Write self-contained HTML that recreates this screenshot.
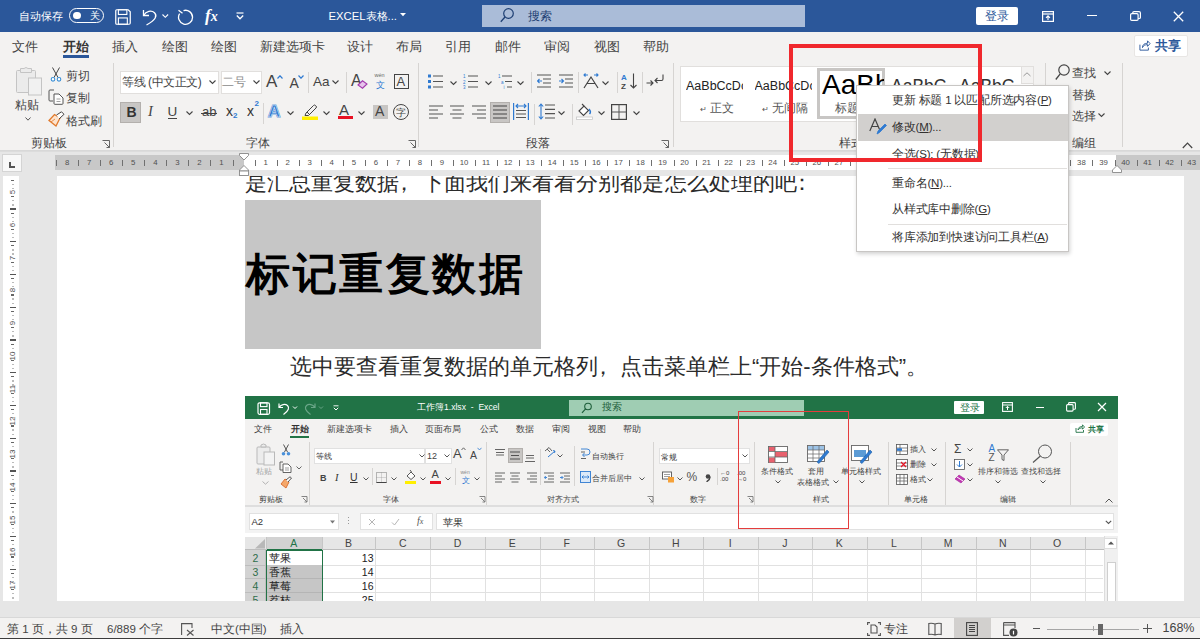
<!DOCTYPE html>
<html><head><meta charset="utf-8">
<style>
*{box-sizing:border-box;margin:0;padding:0}
html,body{width:1200px;height:639px;overflow:hidden;background:#e6e6e6;font-family:"Liberation Sans",sans-serif;color:#323130}
.a{position:absolute;white-space:nowrap}
#title{left:0;top:0;width:1200px;height:32px;background:#2b579a;color:#fff}
#tabs{left:0;top:32px;width:1200px;height:28px;background:#f3f2f1}
#ribbon{left:0;top:60px;width:1200px;height:90px;background:#f3f2f1}
#rshadow{left:0;top:150px;width:1200px;height:4px;background:linear-gradient(#d6d6d6,#e6e6e6)}
.tab{font-size:13px;top:37.5px;color:#444}
.t12{font-size:12px}
.sep{width:1px;background:#d6d4d2}
#status{left:0;top:617px;width:1200px;height:22px;background:#f3f2f1;border-top:1px solid #dcdcdc}
</style></head><body>
<!-- title bar -->
<div id="title" class="a"></div>
<div id="tabs" class="a"></div>
<div id="ribbon" class="a"></div>
  <div class="a" style="left:19px;top:8.5px;font-size:11px;color:#fff">自动保存</div>
  <div class="a" style="left:68.5px;top:8px;width:35.5px;height:15px;border:1.2px solid #fff;border-radius:8px"></div>
  <div class="a" style="left:73px;top:11.8px;width:7.5px;height:7.5px;border-radius:50%;background:#fff"></div>
  <div class="a" style="left:89.5px;top:9.5px;font-size:9.5px;color:#fff">关</div>
  <svg class="a" style="left:114.5px;top:9px" width="16" height="16" viewBox="0 0 17 17"><path d="M1.8 0.8 L14 0.8 L16.2 3 L16.2 15 Q16.2 16.2 15 16.2 L2 16.2 Q0.8 16.2 0.8 15 L0.8 1.8 Q0.8 0.8 1.8 0.8 Z" fill="none" stroke="#fff" stroke-width="1.3"/><rect x="3.6" y="0.8" width="9" height="5" fill="none" stroke="#fff" stroke-width="1.2"/><rect x="3.6" y="9.5" width="9.5" height="6.7" fill="none" stroke="#fff" stroke-width="1.2"/></svg>
  <svg class="a" style="left:142px;top:9px" width="17" height="17" viewBox="0 0 17 17"><path d="M1.5 1 L1.5 6.5 L7 6.5" fill="none" stroke="#fff" stroke-width="1.3"/><path d="M1.8 6.3 C4 2 9.5 1 12.5 3.8 C15.5 6.8 14 10.5 4.5 16" fill="none" stroke="#fff" stroke-width="1.3"/></svg>
  <svg class="a" style="left:162px;top:13.5px" width="7" height="5"><path d="M0.5 0.5 L3.3 3.3 L6.1 0.5" fill="none" stroke="#fff" stroke-width="1.1"/></svg>
  <svg class="a" style="left:177px;top:9px" width="17" height="17" viewBox="0 0 17 17"><path d="M6.5 1.6 A7 7 0 1 1 2.6 4.6" fill="none" stroke="#fff" stroke-width="1.3"/><path d="M1.5 1.2 L5.5 4.2" fill="none" stroke="#fff" stroke-width="1.3"/></svg>
  <div class="a" style="left:205px;top:6px;font-family:'Liberation Serif',serif;font-style:italic;font-weight:bold;font-size:17px;color:#fff">f<span style="font-size:14px">x</span></div>
  <svg class="a" style="left:235.5px;top:12px" width="8" height="8"><path d="M0.5 1 L7.5 1" stroke="#fff" stroke-width="1.2"/><path d="M0.8 3.5 L4 6.8 L7.2 3.5" fill="none" stroke="#fff" stroke-width="1.3"/></svg>
  <div class="a" style="left:328.5px;top:8.5px;font-size:11.3px;color:#fff">EXCEL表格...</div>
  <svg class="a" style="left:399.5px;top:13px" width="6" height="4"><path d="M0 0 L6 0 L3 3.3Z" fill="#fff"/></svg>
  <div class="a" style="left:481.5px;top:5px;width:323.5px;height:21.5px;background:#aabcd8"></div>
  <svg class="a" style="left:500px;top:8px" width="14" height="15" viewBox="0 0 14 15"><circle cx="8.5" cy="5.5" r="4.8" fill="none" stroke="#1e3f73" stroke-width="1.2"/><path d="M5 9 L0.8 13.8" stroke="#1e3f73" stroke-width="1.3"/></svg>
  <div class="a" style="left:527.5px;top:8px;font-size:12px;color:#1e3f73">搜索</div>
  <div class="a" style="left:976px;top:6.5px;width:42px;height:18.5px;background:#fff;border-radius:2px"></div>
  <div class="a" style="left:985px;top:9px;font-size:11.5px;color:#2b579a">登录</div>
  <svg class="a" style="left:1042px;top:10.5px" width="12" height="11" viewBox="0 0 12 11"><rect x="0.6" y="0.6" width="10.8" height="9.8" fill="none" stroke="#fff" stroke-width="1.2"/><path d="M0.6 3 L11.4 3" stroke="#fff" stroke-width="1.2"/><path d="M6 9 L6 4.8 M4 6.8 L6 4.8 L8 6.8" fill="none" stroke="#fff" stroke-width="1.1"/></svg>
  <div class="a" style="left:1087px;top:14.5px;width:10px;height:1.3px;background:#fff"></div>
  <svg class="a" style="left:1130px;top:11px" width="11" height="10" viewBox="0 0 11 10"><rect x="0.6" y="2.6" width="7.5" height="6.8" rx="1.2" fill="none" stroke="#fff" stroke-width="1.2"/><path d="M2.8 2.6 L2.8 1.8 Q2.8 0.6 4 0.6 L9 0.6 Q10.4 0.6 10.4 2 L10.4 6.5 Q10.4 7.5 9.2 7.5 L8.1 7.5" fill="none" stroke="#fff" stroke-width="1.2"/></svg>
  <svg class="a" style="left:1172.5px;top:10.5px" width="11" height="11"><path d="M0.8 0.8 L10.2 10.2 M10.2 0.8 L0.8 10.2" stroke="#fff" stroke-width="1.3"/></svg>
  <!-- share button -->
  <div class="a" style="left:1133.5px;top:35px;width:54.5px;height:21.5px;background:#fff;border:1px solid #e8e6e4;border-radius:2px"></div>
  <svg class="a" style="left:1139px;top:40px" width="12" height="11" viewBox="0 0 14 13"><path d="M1 5.5 L1 12 L11 12 L11 9" fill="none" stroke="#2b579a" stroke-width="1.1"/><path d="M4 9 C4 5.5 6.5 3.8 10 3.8 L10 1 L13 4.3 L10 7.5 L10 5.5 C7 5.5 5 6.5 4 9" fill="none" stroke="#2b579a" stroke-width="1.1"/></svg>
  <div class="a" style="left:1154.5px;top:38px;font-size:12.5px;font-weight:bold;color:#2b579a">共享</div>
<div class="a tab" style="left:12px">文件</div>
<div class="a tab" style="left:63px;font-weight:bold;color:#333">开始</div>
<div class="a" style="left:63px;top:55px;width:26px;height:3px;background:#2b579a"></div>
<div class="a tab" style="left:112px">插入</div>
<div class="a tab" style="left:162px">绘图</div>
<div class="a tab" style="left:211px">绘图</div>
<div class="a tab" style="left:260px">新建选项卡</div>
<div class="a tab" style="left:347px">设计</div>
<div class="a tab" style="left:396px">布局</div>
<div class="a tab" style="left:445px">引用</div>
<div class="a tab" style="left:495px">邮件</div>
<div class="a tab" style="left:544px">审阅</div>
<div class="a tab" style="left:594px">视图</div>
<div class="a tab" style="left:643px">帮助</div>
<div id="rshadow" class="a"></div>
<!-- ===== word ribbon ===== -->
<div class="a" style="left:0;top:0;width:1200px;height:639px;font-size:12px;color:#444">
  <!-- clipboard -->
  <svg class="a" style="left:16px;top:67px" width="27" height="29" viewBox="0 0 27 29"><rect x="0.5" y="3.5" width="19" height="22" rx="1" fill="#ebebeb" stroke="#c4c4c4"/><path d="M4.5 3.5 L4.5 1.5 L8 1.5 Q10 -0.5 12 1.5 L15.5 1.5 L15.5 5.5 L4.5 5.5 Z" fill="#ebebeb" stroke="#c4c4c4"/><rect x="12.5" y="11" width="13" height="17" fill="#f1f1f1" stroke="#c4c4c4"/></svg>
  <div class="a" style="left:15px;top:97px;font-size:12px;color:#444">粘贴</div>
  <svg class="a" style="left:25px;top:117px" width="6" height="4"><path d="M0.5 0.5 L3 3.2 L5.5 0.5" fill="none" stroke="#555" stroke-width="1"/></svg>
  <svg class="a" style="left:50px;top:67px" width="12" height="15" viewBox="0 0 12 15"><path d="M2.5 0.5 L8 10.5 M9.5 0.5 L4 10.5" stroke="#444" stroke-width="1"/><circle cx="3" cy="12.3" r="1.8" fill="#fff" stroke="#3a8fd6" stroke-width="1.1"/><circle cx="9" cy="12.3" r="1.8" fill="#fff" stroke="#3a8fd6" stroke-width="1.1"/></svg>
  <div class="a" style="left:66px;top:68px">剪切</div>
  <svg class="a" style="left:48px;top:89px" width="16" height="16" viewBox="0 0 16 16"><path d="M6 1 L2 1 Q1 1 1 2 L1 11 Q1 12 2 12 L5 12" fill="none" stroke="#555" stroke-width="1"/><path d="M6 5 L11 5 L15 9 L15 14.5 Q15 15.3 14 15.3 L7 15.3 Q6 15.3 6 14.5 Z" fill="#fff" stroke="#555" stroke-width="1"/><path d="M8.5 10 L12.5 10 M8.5 12.5 L12.5 12.5" stroke="#888" stroke-width="0.8"/></svg>
  <div class="a" style="left:66px;top:90px">复制</div>
  <svg class="a" style="left:48px;top:111px" width="17" height="16" viewBox="0 0 17 16"><path d="M1 9.5 L8 15 L12 7 L6.5 3.5 Z" fill="#fde3cd" stroke="#e17a2d" stroke-width="1.3"/><path d="M3 11 L7 8" stroke="#e17a2d" stroke-width="0.8"/><path d="M8.5 4 L13.5 0.8 L16 3.3 L11 8" fill="#fff" stroke="#444" stroke-width="1"/></svg>
  <div class="a" style="left:66px;top:113px">格式刷</div>
  <div class="a" style="left:31px;top:135px">剪贴板</div>
  <svg class="a" style="left:102px;top:139.5px" width="8" height="8"><path d="M0.5 0.5 L7.5 0.5 L7.5 7.5 M2.5 2.5 L7.5 7.5 M4.5 7.5 L7.5 7.5 L7.5 4.5" fill="none" stroke="#666" stroke-width="1"/></svg>
  <div class="a sep" style="left:113px;top:63px;height:84px"></div>
  <!-- font -->
  <div class="a" style="left:120px;top:71px;width:98.5px;height:22.5px;background:#fff;border:1px solid #e1dfdd"></div>
  <div class="a" style="left:122px;top:74px;font-size:12px;color:#444;letter-spacing:-0.45px">等线 (中文正文)</div>
  <svg class="a" style="left:209px;top:80px" width="7" height="5"><path d="M0.5 0.5 L3.5 3.5 L6.5 0.5" fill="none" stroke="#444" stroke-width="1.1"/></svg>
  <div class="a" style="left:220.5px;top:71px;width:41.5px;height:22.5px;background:#fff;border:1px solid #e1dfdd"></div>
  <div class="a" style="left:222px;top:74px;font-size:12px;color:#8a8a8a">二号</div>
  <svg class="a" style="left:253px;top:80px" width="7" height="5"><path d="M0.5 0.5 L3.5 3.5 L6.5 0.5" fill="none" stroke="#444" stroke-width="1.1"/></svg>
  <div class="a" style="left:266px;top:72px;font-size:17px;color:#444">A</div>
  <svg class="a" style="left:276.5px;top:74.5px" width="6" height="4"><path d="M0.5 3.5 L3 0.8 L5.5 3.5" fill="none" stroke="#2f7ad1" stroke-width="1.2"/></svg>
  <div class="a" style="left:289.5px;top:75px;font-size:14px;color:#444">A</div>
  <svg class="a" style="left:297.5px;top:74.5px" width="6" height="4"><path d="M0.5 0.5 L3 3.2 L5.5 0.5" fill="none" stroke="#2f7ad1" stroke-width="1.2"/></svg>
  <div class="a sep" style="left:308px;top:72px;height:21px"></div>
  <div class="a" style="left:313px;top:74px;font-size:13.5px;color:#444">Aa</div>
  <svg class="a" style="left:332px;top:80px" width="7" height="5"><path d="M0.5 0.5 L3.5 3.5 L6.5 0.5" fill="none" stroke="#444" stroke-width="1.1"/></svg>
  <div class="a sep" style="left:345.5px;top:72px;height:21px"></div>
  <div class="a" style="left:351px;top:72px;font-size:16px;color:#444">A</div>
  <svg class="a" style="left:357px;top:80px" width="11" height="9" viewBox="0 0 11 9"><path d="M1 5 L5.5 0.8 L10 4 L5.5 8.2 Z" fill="#e6c4ec" stroke="#a33aad" stroke-width="1.1"/></svg>
  <div class="a" style="left:374.5px;top:72px;font-size:5.5px;color:#666">wén</div>
  <div class="a" style="left:376px;top:79px;font-size:9px;color:#2f7ad1">文</div>
  <div class="a" style="left:393.5px;top:74px;width:15.5px;height:15px;border:1.2px solid #444"></div>
  <div class="a" style="left:396.5px;top:74px;font-size:13px;color:#444">A</div>
  <!-- row 2 -->
  <div class="a" style="left:120px;top:102px;width:21px;height:21px;background:#c8c6c4;border:1px solid #b3b0ad"></div>
  <div class="a" style="left:126.5px;top:104px;font-size:14px;font-weight:bold;color:#333">B</div>
  <div class="a" style="left:148px;top:103px;font-size:14.5px;font-style:italic;font-family:'Liberation Serif',serif;color:#444">I</div>
  <div class="a" style="left:167.5px;top:104px;font-size:13.5px;color:#444">U</div>
  <div class="a" style="left:167.5px;top:117.5px;width:9.5px;height:1.2px;background:#444"></div>
  <svg class="a" style="left:186px;top:111px" width="7" height="5"><path d="M0.5 0.5 L3.5 3.5 L6.5 0.5" fill="none" stroke="#444" stroke-width="1.1"/></svg>
  <div class="a" style="left:202px;top:104px;font-size:13px;color:#444">ab</div>
  <div class="a" style="left:200.5px;top:112.5px;width:16px;height:1.2px;background:#444"></div>
  <div class="a" style="left:226px;top:103px;font-size:14px;color:#333">x</div>
  <div class="a" style="left:233px;top:111px;font-size:8px;color:#2f7ad1;font-weight:bold">2</div>
  <div class="a" style="left:247px;top:103px;font-size:14px;color:#333">x</div>
  <div class="a" style="left:254.5px;top:99px;font-size:8px;color:#2f7ad1;font-weight:bold">2</div>
  <div class="a sep" style="left:263px;top:103px;height:21px"></div>
  <div class="a" style="left:268px;top:102px;font-size:17px;font-weight:bold;color:#2f7ad1;-webkit-text-stroke:1.2px #2f7ad1">A</div><div class="a" style="left:268px;top:102px;font-size:17px;font-weight:bold;color:transparent;-webkit-text-stroke:0.5px #fff">A</div>
  <svg class="a" style="left:287px;top:111px" width="7" height="5"><path d="M0.5 0.5 L3.5 3.5 L6.5 0.5" fill="none" stroke="#444" stroke-width="1.1"/></svg>
  <svg class="a" style="left:302px;top:103px" width="16" height="17" viewBox="0 0 16 17"><path d="M4 10 L11.5 2.5 Q12.5 1.5 13.5 2.5 L14 3 Q15 4 14 5 L6.5 12.5 L3 12.5 Z" fill="none" stroke="#444" stroke-width="1"/><path d="M5 9 L8 12" stroke="#444" stroke-width="1"/><rect x="0" y="13.5" width="16" height="3.5" fill="#ffef00"/></svg>
  <svg class="a" style="left:323px;top:111px" width="7" height="5"><path d="M0.5 0.5 L3.5 3.5 L6.5 0.5" fill="none" stroke="#444" stroke-width="1.1"/></svg>
  <div class="a" style="left:339px;top:101px;font-size:15px;color:#444">A</div>
  <div class="a" style="left:337.5px;top:115.5px;width:15px;height:3.5px;background:#e81123"></div>
  <svg class="a" style="left:358px;top:111px" width="7" height="5"><path d="M0.5 0.5 L3.5 3.5 L6.5 0.5" fill="none" stroke="#444" stroke-width="1.1"/></svg>
  <div class="a" style="left:372.5px;top:104.5px;width:15px;height:14.5px;background:#c8c6c4"></div>
  <div class="a" style="left:375px;top:103px;font-size:14px;color:#444">A</div>
  <div class="a" style="left:393px;top:104px;width:16px;height:16px;border:1.1px solid #444;border-radius:50%"></div>
  <div class="a" style="left:396px;top:105.5px;font-size:10px;color:#444">字</div>
  <div class="a" style="left:246px;top:135px">字体</div>
  <svg class="a" style="left:408px;top:139.5px" width="8" height="8"><path d="M0.5 0.5 L7.5 0.5 L7.5 7.5 M2.5 2.5 L7.5 7.5 M4.5 7.5 L7.5 7.5 L7.5 4.5" fill="none" stroke="#666" stroke-width="1"/></svg>
  <div class="a sep" style="left:418px;top:63px;height:84px"></div>
  <div id="para"></div>
  <!-- paragraph -->
  <svg class="a" style="left:428px;top:74px" width="16" height="15" viewBox="0 0 16 15"><rect x="0" y="0.5" width="3" height="3" fill="#2f7ad1"/><rect x="0" y="6" width="3" height="3" fill="#2f7ad1"/><rect x="0" y="11.5" width="3" height="3" fill="#2f7ad1"/><path d="M5 2 L15 2 M5 7.5 L15 7.5 M5 13 L15 13" stroke="#555" stroke-width="1.2"/></svg>
  <svg class="a" style="left:449.5px;top:80.5px" width="7" height="5"><path d="M0.5 0.5 L3.5 3.5 L6.5 0.5" fill="none" stroke="#444" stroke-width="1.1"/></svg>
  <svg class="a" style="left:463px;top:74px" width="16" height="15" viewBox="0 0 16 15"><text x="0" y="4" font-size="4.5" fill="#2f7ad1" font-family="Liberation Sans">1</text><text x="0" y="9.5" font-size="4.5" fill="#2f7ad1" font-family="Liberation Sans">2</text><text x="0" y="15" font-size="4.5" fill="#2f7ad1" font-family="Liberation Sans">3</text><path d="M5 2 L15 2 M5 7.5 L15 7.5 M5 13 L15 13" stroke="#555" stroke-width="1.2"/></svg>
  <svg class="a" style="left:484.5px;top:80.5px" width="7" height="5"><path d="M0.5 0.5 L3.5 3.5 L6.5 0.5" fill="none" stroke="#444" stroke-width="1.1"/></svg>
  <svg class="a" style="left:498px;top:74px" width="15" height="15" viewBox="0 0 15 15"><text x="0" y="4" font-size="4.5" fill="#2f7ad1" font-family="Liberation Sans">1</text><text x="3" y="9.5" font-size="4.5" fill="#2f7ad1" font-family="Liberation Sans">a</text><text x="5.5" y="15" font-size="4.5" fill="#2f7ad1" font-family="Liberation Sans">i</text><path d="M4 2 L14 2 M7 7.5 L14 7.5 M9 13 L14 13" stroke="#555" stroke-width="1.2"/></svg>
  <svg class="a" style="left:517px;top:80.5px" width="7" height="5"><path d="M0.5 0.5 L3.5 3.5 L6.5 0.5" fill="none" stroke="#444" stroke-width="1.1"/></svg>
  <div class="a sep" style="left:531px;top:72px;height:21px"></div>
  <svg class="a" style="left:537px;top:74px" width="15" height="14" viewBox="0 0 15 14"><path d="M0 1 L14 1 M6 5 L14 5 M6 9 L14 9 M0 13 L14 13" stroke="#555" stroke-width="1.2"/><path d="M5 7 L0.5 7 M2.5 5 L0.5 7 L2.5 9" fill="none" stroke="#2f7ad1" stroke-width="1.1"/></svg>
  <svg class="a" style="left:558.5px;top:74px" width="15" height="14" viewBox="0 0 15 14"><path d="M0 1 L14 1 M6 5 L14 5 M6 9 L14 9 M0 13 L14 13" stroke="#555" stroke-width="1.2"/><path d="M0 7 L4.5 7 M2.5 5 L4.5 7 L2.5 9" fill="none" stroke="#2f7ad1" stroke-width="1.1"/></svg>
  <div class="a sep" style="left:578px;top:72px;height:21px"></div>
  <svg class="a" style="left:583px;top:72px" width="16" height="17" viewBox="0 0 16 17"><path d="M1 16 L8 5 L15 16 M4 11.5 L12 11.5" fill="none" stroke="#444" stroke-width="1.2"/><path d="M1 3 L5 3 M2.5 1.5 L1 3 L2.5 4.5 M15 3 L11 3 M13.5 1.5 L15 3 L13.5 4.5" fill="none" stroke="#2f7ad1" stroke-width="1.1"/></svg>
  <svg class="a" style="left:602px;top:80.5px" width="7" height="5"><path d="M0.5 0.5 L3.5 3.5 L6.5 0.5" fill="none" stroke="#444" stroke-width="1.1"/></svg>
  <div class="a sep" style="left:616.5px;top:72px;height:21px"></div>
  <svg class="a" style="left:621px;top:73px" width="17" height="16" viewBox="0 0 17 16"><text x="0" y="7" font-size="8" fill="#2f7ad1" font-family="Liberation Sans" font-weight="bold">A</text><text x="0" y="15.5" font-size="8" fill="#444" font-family="Liberation Sans" font-weight="bold">Z</text><path d="M12.5 0.5 L12.5 15 M9.5 12 L12.5 15 L15.5 12" fill="none" stroke="#444" stroke-width="1.1"/></svg>
  <div class="a sep" style="left:641.5px;top:72px;height:21px"></div>
  <svg class="a" style="left:646px;top:74px" width="18" height="14" viewBox="0 0 18 14"><path d="M0.5 9 L7 9 M4.5 6.5 L7 9 L4.5 11.5" fill="none" stroke="#444" stroke-width="1.1"/><path d="M17 0.5 L17 5 Q17 6.5 15.5 6.5 L9 6.5 M11.5 4 L9 6.5 L11.5 9" fill="none" stroke="#444" stroke-width="1.1"/></svg>
  <!-- row2 -->
  <svg class="a" style="left:429px;top:105px" width="15" height="14"><path d="M0 1 L14 1 M0 5 L9 5 M0 9 L14 9 M0 13 L9 13" stroke="#555" stroke-width="1.2"/></svg>
  <svg class="a" style="left:450px;top:105px" width="15" height="14"><path d="M0 1 L14 1 M2.5 5 L11.5 5 M0 9 L14 9 M2.5 13 L11.5 13" stroke="#555" stroke-width="1.2"/></svg>
  <svg class="a" style="left:471.5px;top:105px" width="15" height="14"><path d="M0 1 L14 1 M5 5 L14 5 M0 9 L14 9 M5 13 L14 13" stroke="#555" stroke-width="1.2"/></svg>
  <div class="a" style="left:490px;top:102px;width:20px;height:21px;background:#c8c6c4;border:1px solid #b3b0ad"></div>
  <svg class="a" style="left:493px;top:105px" width="15" height="14"><path d="M0 1 L14 1 M0 5 L14 5 M0 9 L14 9 M0 13 L14 13" stroke="#444" stroke-width="1.2"/></svg>
  <svg class="a" style="left:513px;top:103px" width="16" height="17" viewBox="0 0 16 17"><path d="M0.6 0 L0.6 17 M15.4 0 L15.4 17" stroke="#2f7ad1" stroke-width="1.2"/><path d="M3 3 L13 3 M5 1 L3 3 L5 5 M11 1 L13 3 L11 5" fill="none" stroke="#2f7ad1" stroke-width="1.1"/><path d="M3 7.5 L13 7.5 M3 11 L13 11 M3 14.5 L13 14.5" stroke="#555" stroke-width="1.2"/></svg>
  <div class="a sep" style="left:534px;top:104px;height:21px"></div>
  <svg class="a" style="left:538px;top:103px" width="17" height="17" viewBox="0 0 17 17"><path d="M3 1 L3 16 M0.8 3.5 L3 1 L5.2 3.5 M0.8 13.5 L3 16 L5.2 13.5" fill="none" stroke="#2f7ad1" stroke-width="1.1"/><path d="M7 2 L17 2 M7 6.3 L17 6.3 M7 10.6 L17 10.6 M7 15 L17 15" stroke="#555" stroke-width="1.2"/></svg>
  <svg class="a" style="left:557.5px;top:111px" width="7" height="5"><path d="M0.5 0.5 L3.5 3.5 L6.5 0.5" fill="none" stroke="#444" stroke-width="1.1"/></svg>
  <div class="a sep" style="left:572px;top:104px;height:21px"></div>
  <svg class="a" style="left:576px;top:103px" width="17" height="17" viewBox="0 0 17 17"><path d="M3 8 L8 3 L12.5 7.5 L7.5 12.5 Z" fill="#fff" stroke="#444" stroke-width="1.1"/><path d="M6 1 L8 3" stroke="#444" stroke-width="1.1"/><path d="M13 6 Q15.5 9 13.5 11" fill="none" stroke="#2f7ad1" stroke-width="1.5"/><rect x="0.5" y="14" width="16" height="2.5" fill="#fff" stroke="#c8c8c8" stroke-width="0.8"/></svg>
  <svg class="a" style="left:598px;top:111px" width="7" height="5"><path d="M0.5 0.5 L3.5 3.5 L6.5 0.5" fill="none" stroke="#444" stroke-width="1.1"/></svg>
  <svg class="a" style="left:611px;top:104px" width="16" height="16" viewBox="0 0 16 16"><rect x="0.6" y="0.6" width="14.8" height="14.8" fill="none" stroke="#444" stroke-width="1.2"/><path d="M8 0.6 L8 15.4 M0.6 8 L15.4 8" stroke="#555" stroke-width="1"/></svg>
  <svg class="a" style="left:633px;top:111px" width="7" height="5"><path d="M0.5 0.5 L3.5 3.5 L6.5 0.5" fill="none" stroke="#444" stroke-width="1.1"/></svg>
  <div class="a" style="left:526px;top:135px">段落</div>
  <svg class="a" style="left:661px;top:139.5px" width="8" height="8"><path d="M0.5 0.5 L7.5 0.5 L7.5 7.5 M2.5 2.5 L7.5 7.5 M4.5 7.5 L7.5 7.5 L7.5 4.5" fill="none" stroke="#666" stroke-width="1"/></svg>
  <div class="a sep" style="left:672.5px;top:63px;height:84px"></div>
  <!-- styles gallery -->
  <div class="a" style="left:680px;top:65.5px;width:354px;height:56.5px;background:#fff;border:1px solid #e1dfdd"></div>
  <div class="a" style="left:686px;top:78.5px;font-size:12.5px;color:#222;width:57px;overflow:hidden">AaBbCcDc</div>
  <div class="a" style="left:700px;top:100px;font-size:12px;color:#555"><span style="font-size:8px">&#8629;</span> 正文</div>
  <div class="a" style="left:754.5px;top:78.5px;font-size:12.5px;color:#222;width:57px;overflow:hidden">AaBbCcDc</div>
  <div class="a" style="left:762px;top:100px;font-size:12px;color:#555"><span style="font-size:8px">&#8629;</span> 无间隔</div>
  <div class="a" style="left:817px;top:67.5px;width:68px;height:51.5px;border:3px solid #c8c6c4;background:#fff"></div>
  <div class="a" style="left:822px;top:69px;font-size:28px;color:#000;width:62px;overflow:hidden">AaBb</div>
  <div class="a" style="left:835px;top:100px;font-size:12px;color:#555">标题 1</div>
  <div class="a" style="left:891px;top:75.5px;font-size:17.5px;color:#333">AaBbC</div><div class="a" style="left:959px;top:75.5px;font-size:17.5px;color:#333">AaBbC</div>
  <div class="a" style="left:1020.5px;top:65.5px;width:13px;height:18px;background:#f3f2f1;border:1px solid #e1dfdd"></div>
  <svg class="a" style="left:1023px;top:72px" width="8" height="5"><path d="M0.5 4 L4 0.8 L7.5 4" fill="none" stroke="#999" stroke-width="1"/></svg>
  <div class="a" style="left:839px;top:135px">样式</div>
  <div class="a sep" style="left:1044.5px;top:63px;height:84px"></div>
  <!-- editing -->
  <svg class="a" style="left:1055px;top:64px" width="15" height="17" viewBox="0 0 15 17"><circle cx="9" cy="6" r="5.2" fill="none" stroke="#444" stroke-width="1.2"/><path d="M5.2 9.8 L0.8 15.5" stroke="#444" stroke-width="1.3"/></svg>
  <div class="a" style="left:1071.5px;top:65px">查找</div>
  <svg class="a" style="left:1103.5px;top:70.5px" width="7" height="5"><path d="M0.5 0.5 L3.5 3.5 L6.5 0.5" fill="none" stroke="#444" stroke-width="1.1"/></svg>
  <div class="a" style="left:1071.5px;top:86.5px">替换</div>
  <div class="a" style="left:1071.5px;top:108px">选择</div>
  <svg class="a" style="left:1097.5px;top:113px" width="7" height="5"><path d="M0.5 0.5 L3.5 3.5 L6.5 0.5" fill="none" stroke="#444" stroke-width="1.1"/></svg>
  <div class="a" style="left:1071.5px;top:135px">编组</div>
  <div class="a sep" style="left:1121.5px;top:63px;height:84px"></div>
  <svg class="a" style="left:1182px;top:142px" width="11" height="7"><path d="M0.8 6 L5.5 1.2 L10.2 6" fill="none" stroke="#444" stroke-width="1.2"/></svg>

</div>


<!-- ===== document canvas ===== -->
<div class="a" style="left:0;top:152px;width:1200px;height:465px;background:#e6e6e6"></div>
<!-- ruler corner -->
<div class="a" style="left:2px;top:153.5px;width:19.5px;height:18.5px;background:#f8f8f8;border:1.5px solid #d4d4d4"></div>
<div class="a" style="left:8.5px;top:161.5px;width:2px;height:6px;background:#555"></div>
<div class="a" style="left:8.5px;top:165.5px;width:6px;height:2px;background:#555"></div>
<!-- horizontal ruler -->
<div class="a" style="left:55px;top:155px;width:1145px;height:15px;background:#c8c8c8"></div>
<div class="a" style="left:244px;top:155px;width:872px;height:15px;background:#fff"></div>
<div id="hruler"></div>
<div class="a" style="left:59.1px;top:158.3px;width:16px;text-align:center;font-size:7.8px;color:#505050;line-height:10px">8</div>
<div class="a" style="left:81.2px;top:158.3px;width:16px;text-align:center;font-size:7.8px;color:#505050;line-height:10px">7</div>
<div class="a" style="left:103.2px;top:158.3px;width:16px;text-align:center;font-size:7.8px;color:#505050;line-height:10px">6</div>
<div class="a" style="left:125.2px;top:158.3px;width:16px;text-align:center;font-size:7.8px;color:#505050;line-height:10px">5</div>
<div class="a" style="left:147.3px;top:158.3px;width:16px;text-align:center;font-size:7.8px;color:#505050;line-height:10px">4</div>
<div class="a" style="left:169.3px;top:158.3px;width:16px;text-align:center;font-size:7.8px;color:#505050;line-height:10px">3</div>
<div class="a" style="left:191.4px;top:158.3px;width:16px;text-align:center;font-size:7.8px;color:#505050;line-height:10px">2</div>
<div class="a" style="left:213.4px;top:158.3px;width:16px;text-align:center;font-size:7.8px;color:#505050;line-height:10px">1</div>
<div class="a" style="left:257.6px;top:158.3px;width:16px;text-align:center;font-size:7.8px;color:#505050;line-height:10px">1</div>
<div class="a" style="left:279.6px;top:158.3px;width:16px;text-align:center;font-size:7.8px;color:#505050;line-height:10px">2</div>
<div class="a" style="left:301.6px;top:158.3px;width:16px;text-align:center;font-size:7.8px;color:#505050;line-height:10px">3</div>
<div class="a" style="left:323.7px;top:158.3px;width:16px;text-align:center;font-size:7.8px;color:#505050;line-height:10px">4</div>
<div class="a" style="left:345.8px;top:158.3px;width:16px;text-align:center;font-size:7.8px;color:#505050;line-height:10px">5</div>
<div class="a" style="left:367.8px;top:158.3px;width:16px;text-align:center;font-size:7.8px;color:#505050;line-height:10px">6</div>
<div class="a" style="left:389.9px;top:158.3px;width:16px;text-align:center;font-size:7.8px;color:#505050;line-height:10px">7</div>
<div class="a" style="left:411.9px;top:158.3px;width:16px;text-align:center;font-size:7.8px;color:#505050;line-height:10px">8</div>
<div class="a" style="left:434.0px;top:158.3px;width:16px;text-align:center;font-size:7.8px;color:#505050;line-height:10px">9</div>
<div class="a" style="left:456.0px;top:158.3px;width:16px;text-align:center;font-size:7.8px;color:#505050;line-height:10px">10</div>
<div class="a" style="left:478.1px;top:158.3px;width:16px;text-align:center;font-size:7.8px;color:#505050;line-height:10px">11</div>
<div class="a" style="left:500.1px;top:158.3px;width:16px;text-align:center;font-size:7.8px;color:#505050;line-height:10px">12</div>
<div class="a" style="left:522.2px;top:158.3px;width:16px;text-align:center;font-size:7.8px;color:#505050;line-height:10px">13</div>
<div class="a" style="left:544.2px;top:158.3px;width:16px;text-align:center;font-size:7.8px;color:#505050;line-height:10px">14</div>
<div class="a" style="left:566.2px;top:158.3px;width:16px;text-align:center;font-size:7.8px;color:#505050;line-height:10px">15</div>
<div class="a" style="left:588.3px;top:158.3px;width:16px;text-align:center;font-size:7.8px;color:#505050;line-height:10px">16</div>
<div class="a" style="left:610.4px;top:158.3px;width:16px;text-align:center;font-size:7.8px;color:#505050;line-height:10px">17</div>
<div class="a" style="left:632.4px;top:158.3px;width:16px;text-align:center;font-size:7.8px;color:#505050;line-height:10px">18</div>
<div class="a" style="left:654.5px;top:158.3px;width:16px;text-align:center;font-size:7.8px;color:#505050;line-height:10px">19</div>
<div class="a" style="left:676.5px;top:158.3px;width:16px;text-align:center;font-size:7.8px;color:#505050;line-height:10px">20</div>
<div class="a" style="left:698.5px;top:158.3px;width:16px;text-align:center;font-size:7.8px;color:#505050;line-height:10px">21</div>
<div class="a" style="left:720.6px;top:158.3px;width:16px;text-align:center;font-size:7.8px;color:#505050;line-height:10px">22</div>
<div class="a" style="left:742.7px;top:158.3px;width:16px;text-align:center;font-size:7.8px;color:#505050;line-height:10px">23</div>
<div class="a" style="left:764.7px;top:158.3px;width:16px;text-align:center;font-size:7.8px;color:#505050;line-height:10px">24</div>
<div class="a" style="left:786.8px;top:158.3px;width:16px;text-align:center;font-size:7.8px;color:#505050;line-height:10px">25</div>
<div class="a" style="left:808.8px;top:158.3px;width:16px;text-align:center;font-size:7.8px;color:#505050;line-height:10px">26</div>
<div class="a" style="left:830.9px;top:158.3px;width:16px;text-align:center;font-size:7.8px;color:#505050;line-height:10px">27</div>
<div class="a" style="left:852.9px;top:158.3px;width:16px;text-align:center;font-size:7.8px;color:#505050;line-height:10px">28</div>
<div class="a" style="left:875.0px;top:158.3px;width:16px;text-align:center;font-size:7.8px;color:#505050;line-height:10px">29</div>
<div class="a" style="left:897.0px;top:158.3px;width:16px;text-align:center;font-size:7.8px;color:#505050;line-height:10px">30</div>
<div class="a" style="left:919.1px;top:158.3px;width:16px;text-align:center;font-size:7.8px;color:#505050;line-height:10px">31</div>
<div class="a" style="left:941.1px;top:158.3px;width:16px;text-align:center;font-size:7.8px;color:#505050;line-height:10px">32</div>
<div class="a" style="left:963.1px;top:158.3px;width:16px;text-align:center;font-size:7.8px;color:#505050;line-height:10px">33</div>
<div class="a" style="left:985.2px;top:158.3px;width:16px;text-align:center;font-size:7.8px;color:#505050;line-height:10px">34</div>
<div class="a" style="left:1007.2px;top:158.3px;width:16px;text-align:center;font-size:7.8px;color:#505050;line-height:10px">35</div>
<div class="a" style="left:1029.3px;top:158.3px;width:16px;text-align:center;font-size:7.8px;color:#505050;line-height:10px">36</div>
<div class="a" style="left:1051.3px;top:158.3px;width:16px;text-align:center;font-size:7.8px;color:#505050;line-height:10px">37</div>
<div class="a" style="left:1073.4px;top:158.3px;width:16px;text-align:center;font-size:7.8px;color:#505050;line-height:10px">38</div>
<div class="a" style="left:1095.5px;top:158.3px;width:16px;text-align:center;font-size:7.8px;color:#505050;line-height:10px">39</div>
<div class="a" style="left:1117.5px;top:158.3px;width:16px;text-align:center;font-size:7.8px;color:#505050;line-height:10px">40</div>
<div class="a" style="left:1139.6px;top:158.3px;width:16px;text-align:center;font-size:7.8px;color:#505050;line-height:10px">41</div>
<div class="a" style="left:1161.6px;top:158.3px;width:16px;text-align:center;font-size:7.8px;color:#505050;line-height:10px">42</div>
<div class="a" style="left:1183.7px;top:158.3px;width:16px;text-align:center;font-size:7.8px;color:#505050;line-height:10px">43</div>
<div class="a" style="left:56.1px;top:160px;width:1px;height:5.5px;background:#707070"></div>
<div class="a" style="left:78.1px;top:160px;width:1px;height:5.5px;background:#707070"></div>
<div class="a" style="left:100.2px;top:160px;width:1px;height:5.5px;background:#707070"></div>
<div class="a" style="left:122.2px;top:160px;width:1px;height:5.5px;background:#707070"></div>
<div class="a" style="left:144.3px;top:160px;width:1px;height:5.5px;background:#707070"></div>
<div class="a" style="left:166.3px;top:160px;width:1px;height:5.5px;background:#707070"></div>
<div class="a" style="left:188.4px;top:160px;width:1px;height:5.5px;background:#707070"></div>
<div class="a" style="left:210.4px;top:160px;width:1px;height:5.5px;background:#707070"></div>
<div class="a" style="left:232.5px;top:160px;width:1px;height:5.5px;background:#707070"></div>
<div class="a" style="left:254.5px;top:160px;width:1px;height:5.5px;background:#707070"></div>
<div class="a" style="left:276.6px;top:160px;width:1px;height:5.5px;background:#707070"></div>
<div class="a" style="left:298.6px;top:160px;width:1px;height:5.5px;background:#707070"></div>
<div class="a" style="left:320.7px;top:160px;width:1px;height:5.5px;background:#707070"></div>
<div class="a" style="left:342.7px;top:160px;width:1px;height:5.5px;background:#707070"></div>
<div class="a" style="left:364.8px;top:160px;width:1px;height:5.5px;background:#707070"></div>
<div class="a" style="left:386.8px;top:160px;width:1px;height:5.5px;background:#707070"></div>
<div class="a" style="left:408.9px;top:160px;width:1px;height:5.5px;background:#707070"></div>
<div class="a" style="left:430.9px;top:160px;width:1px;height:5.5px;background:#707070"></div>
<div class="a" style="left:453.0px;top:160px;width:1px;height:5.5px;background:#707070"></div>
<div class="a" style="left:475.0px;top:160px;width:1px;height:5.5px;background:#707070"></div>
<div class="a" style="left:497.1px;top:160px;width:1px;height:5.5px;background:#707070"></div>
<div class="a" style="left:519.1px;top:160px;width:1px;height:5.5px;background:#707070"></div>
<div class="a" style="left:541.2px;top:160px;width:1px;height:5.5px;background:#707070"></div>
<div class="a" style="left:563.2px;top:160px;width:1px;height:5.5px;background:#707070"></div>
<div class="a" style="left:585.3px;top:160px;width:1px;height:5.5px;background:#707070"></div>
<div class="a" style="left:607.3px;top:160px;width:1px;height:5.5px;background:#707070"></div>
<div class="a" style="left:629.4px;top:160px;width:1px;height:5.5px;background:#707070"></div>
<div class="a" style="left:651.4px;top:160px;width:1px;height:5.5px;background:#707070"></div>
<div class="a" style="left:673.5px;top:160px;width:1px;height:5.5px;background:#707070"></div>
<div class="a" style="left:695.5px;top:160px;width:1px;height:5.5px;background:#707070"></div>
<div class="a" style="left:717.6px;top:160px;width:1px;height:5.5px;background:#707070"></div>
<div class="a" style="left:739.6px;top:160px;width:1px;height:5.5px;background:#707070"></div>
<div class="a" style="left:761.7px;top:160px;width:1px;height:5.5px;background:#707070"></div>
<div class="a" style="left:783.7px;top:160px;width:1px;height:5.5px;background:#707070"></div>
<div class="a" style="left:805.8px;top:160px;width:1px;height:5.5px;background:#707070"></div>
<div class="a" style="left:827.8px;top:160px;width:1px;height:5.5px;background:#707070"></div>
<div class="a" style="left:849.9px;top:160px;width:1px;height:5.5px;background:#707070"></div>
<div class="a" style="left:871.9px;top:160px;width:1px;height:5.5px;background:#707070"></div>
<div class="a" style="left:894.0px;top:160px;width:1px;height:5.5px;background:#707070"></div>
<div class="a" style="left:916.0px;top:160px;width:1px;height:5.5px;background:#707070"></div>
<div class="a" style="left:938.1px;top:160px;width:1px;height:5.5px;background:#707070"></div>
<div class="a" style="left:960.1px;top:160px;width:1px;height:5.5px;background:#707070"></div>
<div class="a" style="left:982.2px;top:160px;width:1px;height:5.5px;background:#707070"></div>
<div class="a" style="left:1004.2px;top:160px;width:1px;height:5.5px;background:#707070"></div>
<div class="a" style="left:1026.3px;top:160px;width:1px;height:5.5px;background:#707070"></div>
<div class="a" style="left:1048.3px;top:160px;width:1px;height:5.5px;background:#707070"></div>
<div class="a" style="left:1070.4px;top:160px;width:1px;height:5.5px;background:#707070"></div>
<div class="a" style="left:1092.4px;top:160px;width:1px;height:5.5px;background:#707070"></div>
<div class="a" style="left:1114.5px;top:160px;width:1px;height:5.5px;background:#707070"></div>
<div class="a" style="left:1136.5px;top:160px;width:1px;height:5.5px;background:#707070"></div>
<div class="a" style="left:1158.6px;top:160px;width:1px;height:5.5px;background:#707070"></div>
<div class="a" style="left:1180.6px;top:160px;width:1px;height:5.5px;background:#707070"></div>
<svg class="a" style="left:238.5px;top:152.5px" width="10" height="23" viewBox="0 0 10 23"><path d="M0.5 0.5 L9.5 0.5 L9.5 2.5 L5 7 L0.5 2.5 Z" fill="#fff" stroke="#888" stroke-width="0.9"/><path d="M5 12.5 L9.5 17 L9.5 18 L0.5 18 L0.5 17 Z" fill="#fff" stroke="#888" stroke-width="0.9"/><rect x="0.5" y="18" width="9" height="4.5" fill="#fff" stroke="#888" stroke-width="0.9"/></svg>
<svg class="a" style="left:1111.5px;top:164.5px" width="10" height="8" viewBox="0 0 10 8"><path d="M5 0.5 L9.5 5 L9.5 7.5 L0.5 7.5 L0.5 5 Z" fill="#fff" stroke="#888" stroke-width="0.9"/></svg>
<!-- vertical ruler -->
<div class="a" style="left:3px;top:176px;width:16px;height:425px;background:#fff"></div>
<div id="vruler"></div>
<div class="a" style="left:11.1px;top:179.8px;width:3px;height:1.3px;background:#666"></div>
<div class="a" style="left:11.6px;top:183.8px;width:2px;height:1.3px;background:#bbb"></div>
<div class="a" style="left:11.6px;top:187.9px;width:2px;height:1.3px;background:#bbb"></div>
<div class="a" style="left:7.5px;top:187.0px;width:10px;height:10px;font-size:8px;line-height:10px;text-align:center;color:#505050;transform:rotate(-90deg)">5</div>
<div class="a" style="left:11.1px;top:196.1px;width:3px;height:1.3px;background:#666"></div>
<div class="a" style="left:11.6px;top:200.2px;width:2px;height:1.3px;background:#bbb"></div>
<div class="a" style="left:11.6px;top:204.3px;width:2px;height:1.3px;background:#bbb"></div>
<div class="a" style="left:9.6px;top:208.4px;width:6px;height:1.3px;background:#555"></div>
<div class="a" style="left:11.1px;top:212.5px;width:3px;height:1.3px;background:#666"></div>
<div class="a" style="left:11.6px;top:216.6px;width:2px;height:1.3px;background:#bbb"></div>
<div class="a" style="left:11.6px;top:220.7px;width:2px;height:1.3px;background:#bbb"></div>
<div class="a" style="left:7.5px;top:219.8px;width:10px;height:10px;font-size:8px;line-height:10px;text-align:center;color:#505050;transform:rotate(-90deg)">6</div>
<div class="a" style="left:11.1px;top:228.8px;width:3px;height:1.3px;background:#666"></div>
<div class="a" style="left:11.6px;top:232.9px;width:2px;height:1.3px;background:#bbb"></div>
<div class="a" style="left:11.6px;top:237.1px;width:2px;height:1.3px;background:#bbb"></div>
<div class="a" style="left:9.6px;top:241.2px;width:6px;height:1.3px;background:#555"></div>
<div class="a" style="left:11.1px;top:245.2px;width:3px;height:1.3px;background:#666"></div>
<div class="a" style="left:11.6px;top:249.3px;width:2px;height:1.3px;background:#bbb"></div>
<div class="a" style="left:11.6px;top:253.4px;width:2px;height:1.3px;background:#bbb"></div>
<div class="a" style="left:7.5px;top:252.5px;width:10px;height:10px;font-size:8px;line-height:10px;text-align:center;color:#505050;transform:rotate(-90deg)">7</div>
<div class="a" style="left:11.1px;top:261.6px;width:3px;height:1.3px;background:#666"></div>
<div class="a" style="left:11.6px;top:265.7px;width:2px;height:1.3px;background:#bbb"></div>
<div class="a" style="left:11.6px;top:269.8px;width:2px;height:1.3px;background:#bbb"></div>
<div class="a" style="left:9.6px;top:273.9px;width:6px;height:1.3px;background:#555"></div>
<div class="a" style="left:11.1px;top:278.0px;width:3px;height:1.3px;background:#666"></div>
<div class="a" style="left:11.6px;top:282.1px;width:2px;height:1.3px;background:#bbb"></div>
<div class="a" style="left:11.6px;top:286.2px;width:2px;height:1.3px;background:#bbb"></div>
<div class="a" style="left:7.5px;top:285.2px;width:10px;height:10px;font-size:8px;line-height:10px;text-align:center;color:#505050;transform:rotate(-90deg)">8</div>
<div class="a" style="left:11.1px;top:294.4px;width:3px;height:1.3px;background:#666"></div>
<div class="a" style="left:11.6px;top:298.4px;width:2px;height:1.3px;background:#bbb"></div>
<div class="a" style="left:11.6px;top:302.6px;width:2px;height:1.3px;background:#bbb"></div>
<div class="a" style="left:9.6px;top:306.6px;width:6px;height:1.3px;background:#555"></div>
<div class="a" style="left:11.1px;top:310.8px;width:3px;height:1.3px;background:#666"></div>
<div class="a" style="left:11.6px;top:314.9px;width:2px;height:1.3px;background:#bbb"></div>
<div class="a" style="left:11.6px;top:318.9px;width:2px;height:1.3px;background:#bbb"></div>
<div class="a" style="left:7.5px;top:318.0px;width:10px;height:10px;font-size:8px;line-height:10px;text-align:center;color:#505050;transform:rotate(-90deg)">9</div>
<div class="a" style="left:11.1px;top:327.1px;width:3px;height:1.3px;background:#666"></div>
<div class="a" style="left:11.6px;top:331.2px;width:2px;height:1.3px;background:#bbb"></div>
<div class="a" style="left:11.6px;top:335.3px;width:2px;height:1.3px;background:#bbb"></div>
<div class="a" style="left:9.6px;top:339.4px;width:6px;height:1.3px;background:#555"></div>
<div class="a" style="left:11.1px;top:343.5px;width:3px;height:1.3px;background:#666"></div>
<div class="a" style="left:11.6px;top:347.6px;width:2px;height:1.3px;background:#bbb"></div>
<div class="a" style="left:11.6px;top:351.7px;width:2px;height:1.3px;background:#bbb"></div>
<div class="a" style="left:7.5px;top:350.8px;width:10px;height:10px;font-size:8px;line-height:10px;text-align:center;color:#505050;transform:rotate(-90deg)">10</div>
<div class="a" style="left:11.1px;top:359.9px;width:3px;height:1.3px;background:#666"></div>
<div class="a" style="left:11.6px;top:363.9px;width:2px;height:1.3px;background:#bbb"></div>
<div class="a" style="left:11.6px;top:368.1px;width:2px;height:1.3px;background:#bbb"></div>
<div class="a" style="left:9.6px;top:372.1px;width:6px;height:1.3px;background:#555"></div>
<div class="a" style="left:11.1px;top:376.2px;width:3px;height:1.3px;background:#666"></div>
<div class="a" style="left:11.6px;top:380.4px;width:2px;height:1.3px;background:#bbb"></div>
<div class="a" style="left:11.6px;top:384.4px;width:2px;height:1.3px;background:#bbb"></div>
<div class="a" style="left:7.5px;top:383.5px;width:10px;height:10px;font-size:8px;line-height:10px;text-align:center;color:#505050;transform:rotate(-90deg)">11</div>
<div class="a" style="left:11.1px;top:392.6px;width:3px;height:1.3px;background:#666"></div>
<div class="a" style="left:11.6px;top:396.7px;width:2px;height:1.3px;background:#bbb"></div>
<div class="a" style="left:11.6px;top:400.8px;width:2px;height:1.3px;background:#bbb"></div>
<div class="a" style="left:9.6px;top:404.9px;width:6px;height:1.3px;background:#555"></div>
<div class="a" style="left:11.1px;top:409.0px;width:3px;height:1.3px;background:#666"></div>
<div class="a" style="left:11.6px;top:413.1px;width:2px;height:1.3px;background:#bbb"></div>
<div class="a" style="left:11.6px;top:417.2px;width:2px;height:1.3px;background:#bbb"></div>
<div class="a" style="left:7.5px;top:416.2px;width:10px;height:10px;font-size:8px;line-height:10px;text-align:center;color:#505050;transform:rotate(-90deg)">12</div>
<div class="a" style="left:11.1px;top:425.4px;width:3px;height:1.3px;background:#666"></div>
<div class="a" style="left:11.6px;top:429.4px;width:2px;height:1.3px;background:#bbb"></div>
<div class="a" style="left:11.6px;top:433.6px;width:2px;height:1.3px;background:#bbb"></div>
<div class="a" style="left:9.6px;top:437.6px;width:6px;height:1.3px;background:#555"></div>
<div class="a" style="left:11.1px;top:441.8px;width:3px;height:1.3px;background:#666"></div>
<div class="a" style="left:11.6px;top:445.9px;width:2px;height:1.3px;background:#bbb"></div>
<div class="a" style="left:11.6px;top:449.9px;width:2px;height:1.3px;background:#bbb"></div>
<div class="a" style="left:7.5px;top:449.0px;width:10px;height:10px;font-size:8px;line-height:10px;text-align:center;color:#505050;transform:rotate(-90deg)">13</div>
<div class="a" style="left:11.1px;top:458.1px;width:3px;height:1.3px;background:#666"></div>
<div class="a" style="left:11.6px;top:462.2px;width:2px;height:1.3px;background:#bbb"></div>
<div class="a" style="left:11.6px;top:466.3px;width:2px;height:1.3px;background:#bbb"></div>
<div class="a" style="left:9.6px;top:470.4px;width:6px;height:1.3px;background:#555"></div>
<div class="a" style="left:11.1px;top:474.5px;width:3px;height:1.3px;background:#666"></div>
<div class="a" style="left:11.6px;top:478.6px;width:2px;height:1.3px;background:#bbb"></div>
<div class="a" style="left:11.6px;top:482.7px;width:2px;height:1.3px;background:#bbb"></div>
<div class="a" style="left:7.5px;top:481.8px;width:10px;height:10px;font-size:8px;line-height:10px;text-align:center;color:#505050;transform:rotate(-90deg)">14</div>
<div class="a" style="left:11.1px;top:490.9px;width:3px;height:1.3px;background:#666"></div>
<div class="a" style="left:11.6px;top:494.9px;width:2px;height:1.3px;background:#bbb"></div>
<div class="a" style="left:11.6px;top:499.1px;width:2px;height:1.3px;background:#bbb"></div>
<div class="a" style="left:9.6px;top:503.1px;width:6px;height:1.3px;background:#555"></div>
<div class="a" style="left:11.1px;top:507.2px;width:3px;height:1.3px;background:#666"></div>
<div class="a" style="left:11.6px;top:511.4px;width:2px;height:1.3px;background:#bbb"></div>
<div class="a" style="left:11.6px;top:515.5px;width:2px;height:1.3px;background:#bbb"></div>
<div class="a" style="left:7.5px;top:514.5px;width:10px;height:10px;font-size:8px;line-height:10px;text-align:center;color:#505050;transform:rotate(-90deg)">15</div>
<div class="a" style="left:11.1px;top:523.6px;width:3px;height:1.3px;background:#666"></div>
<div class="a" style="left:11.6px;top:527.7px;width:2px;height:1.3px;background:#bbb"></div>
<div class="a" style="left:11.6px;top:531.8px;width:2px;height:1.3px;background:#bbb"></div>
<div class="a" style="left:9.6px;top:535.9px;width:6px;height:1.3px;background:#555"></div>
<div class="a" style="left:11.1px;top:540.0px;width:3px;height:1.3px;background:#666"></div>
<div class="a" style="left:11.6px;top:544.1px;width:2px;height:1.3px;background:#bbb"></div>
<div class="a" style="left:11.6px;top:548.2px;width:2px;height:1.3px;background:#bbb"></div>
<div class="a" style="left:7.5px;top:547.2px;width:10px;height:10px;font-size:8px;line-height:10px;text-align:center;color:#505050;transform:rotate(-90deg)">16</div>
<div class="a" style="left:11.1px;top:556.4px;width:3px;height:1.3px;background:#666"></div>
<div class="a" style="left:11.6px;top:560.5px;width:2px;height:1.3px;background:#bbb"></div>
<div class="a" style="left:11.6px;top:564.5px;width:2px;height:1.3px;background:#bbb"></div>
<div class="a" style="left:9.6px;top:568.6px;width:6px;height:1.3px;background:#555"></div>
<div class="a" style="left:11.1px;top:572.8px;width:3px;height:1.3px;background:#666"></div>
<div class="a" style="left:11.6px;top:576.9px;width:2px;height:1.3px;background:#bbb"></div>
<div class="a" style="left:11.6px;top:581.0px;width:2px;height:1.3px;background:#bbb"></div>
<div class="a" style="left:7.5px;top:580.0px;width:10px;height:10px;font-size:8px;line-height:10px;text-align:center;color:#505050;transform:rotate(-90deg)">17</div>
<div class="a" style="left:11.1px;top:589.1px;width:3px;height:1.3px;background:#666"></div>
<div class="a" style="left:11.6px;top:593.2px;width:2px;height:1.3px;background:#bbb"></div>
<div class="a" style="left:11.6px;top:597.3px;width:2px;height:1.3px;background:#bbb"></div>
<!-- page -->
<div class="a" style="left:57px;top:176px;width:1127px;height:425px;background:#fff;overflow:hidden">
  <div class="a" style="left:188px;top:-8.5px;font-size:22px;color:#2b2b2b;letter-spacing:0.08px">是汇总重复数据<span style="position:relative;left:-7px">，</span>下面我们来看看分别都是怎么处理的吧<span style="position:relative;left:-6px">：</span></div>
  <div class="a" style="left:188px;top:24px;width:296px;height:149px;background:#c6c6c6"></div>
  <div class="a" style="left:189px;top:68.6px;font-size:44px;font-weight:bold;color:#000;letter-spacing:2.6px">标记重复数据</div>
  <div class="a" style="left:233px;top:176px;font-size:22px;color:#2b2b2b">选中要查看重复数据的单元格列<span style="position:relative;left:-6px">，</span>点击菜单栏上“开始-条件格式”。</div>
</div>

<!-- ===== excel screenshot ===== -->
<div id="xl" class="a" style="left:245px;top:396px;width:873px;height:205px;background:#f3f2f1;overflow:hidden;font-size:8.3px;color:#444">
  <div class="a" style="left:0;top:0;width:873px;height:23px;background:#217346"></div>
  <!-- QAT -->
  <svg class="a" style="left:12px;top:6px" width="14" height="13" viewBox="0 0 14 13"><rect x="1" y="0.8" width="11.5" height="11.5" rx="1.5" fill="none" stroke="#fff" stroke-width="1.2"/><rect x="3.5" y="0.8" width="6.5" height="3.8" fill="none" stroke="#fff" stroke-width="1.1"/><rect x="3.5" y="7.5" width="6.5" height="4.8" fill="none" stroke="#fff" stroke-width="1.1"/></svg>
  <svg class="a" style="left:32px;top:6px" width="14" height="13" viewBox="0 0 14 13"><path d="M2 1.5 L2 5.5 L6 5.5 M2.3 5.2 C4 2.5 8 1.5 10.5 3.5 C12.5 5.5 12 8.5 6.5 12.5" fill="none" stroke="#fff" stroke-width="1.2"/></svg>
  <svg class="a" style="left:47px;top:9px" width="6" height="5"><path d="M1 1.5 L3 3.5 L5 1.5" fill="none" stroke="#fff" stroke-width="1"/></svg>
  <svg class="a" style="left:58px;top:6px" width="14" height="13" viewBox="0 0 14 13"><path d="M12 1.5 L12 5.5 L8 5.5 M11.7 5.2 C10 2.5 6 1.5 3.5 3.5 C1.5 5.5 2 8.5 7.5 12.5" fill="none" stroke="#6aa688" stroke-width="1.2"/></svg>
  <svg class="a" style="left:73px;top:9px" width="6" height="5"><path d="M1 1.5 L3 3.5 L5 1.5" fill="none" stroke="#6aa688" stroke-width="1"/></svg>
  <svg class="a" style="left:88px;top:9px" width="6" height="6"><path d="M0.5 0.8 L5.5 0.8" stroke="#fff" stroke-width="0.9"/><path d="M0.8 2.8 L3 5 L5.2 2.8" fill="none" stroke="#fff" stroke-width="1"/></svg>
  <div class="a" style="left:172px;top:5.5px;color:#fff;font-size:8.6px">工作簿1.xlsx&nbsp; - &nbsp;Excel</div>
  <div class="a" style="left:324px;top:4px;width:235px;height:15.5px;background:#9fcdb3"></div>
  <svg class="a" style="left:336px;top:6px" width="12" height="12" viewBox="0 0 12 12"><circle cx="7" cy="4.5" r="3.3" fill="none" stroke="#1e5e3b" stroke-width="1.1"/><path d="M4.6 6.9 L1 10.8" stroke="#1e5e3b" stroke-width="1.2"/></svg>
  <div class="a" style="left:357px;top:5px;color:#1e5e3b;font-size:9.5px">搜索</div>
  <div class="a" style="left:709px;top:5px;width:30px;height:13px;background:#fff;border-radius:1px"></div>
  <div class="a" style="left:715px;top:5.5px;color:#217346;font-size:9.5px">登录</div>
  <svg class="a" style="left:757px;top:6px" width="11" height="10" viewBox="0 0 11 10"><rect x="0.6" y="0.6" width="9.8" height="8.8" fill="none" stroke="#fff" stroke-width="1.1"/><path d="M0.6 3 L10.4 3 M5.5 8 L5.5 4.5 M3.8 6 L5.5 4.3 L7.2 6" fill="none" stroke="#fff" stroke-width="1"/></svg>
  <div class="a" style="left:791px;top:11px;width:8px;height:1.2px;background:#fff"></div>
  <svg class="a" style="left:821px;top:6px" width="10" height="10" viewBox="0 0 10 10"><rect x="0.6" y="2.6" width="6.5" height="6.5" rx="1" fill="none" stroke="#fff" stroke-width="1.1"/><path d="M2.6 2.6 L2.6 1.5 Q2.6 0.6 3.5 0.6 L8.5 0.6 Q9.4 0.6 9.4 1.5 L9.4 6.5 Q9.4 7.2 8.5 7.2 L7.1 7.2" fill="none" stroke="#fff" stroke-width="1.1"/></svg>
  <svg class="a" style="left:852px;top:6px" width="10" height="10"><path d="M1 1 L9 9 M9 1 L1 9" stroke="#fff" stroke-width="1.2"/></svg>
  <!-- tabs -->
  <div class="a" style="left:9px;top:27px;font-size:9px">文件</div>
  <div class="a" style="left:45.5px;top:27px;font-size:9px;font-weight:bold;color:#333">开始</div>
  <div class="a" style="left:45px;top:40px;width:19px;height:2px;background:#217346"></div>
  <div class="a" style="left:81.5px;top:27px;font-size:9px">新建选项卡</div>
  <div class="a" style="left:145px;top:27px;font-size:9px">插入</div>
  <div class="a" style="left:180px;top:27px;font-size:9px">页面布局</div>
  <div class="a" style="left:235px;top:27px;font-size:9px">公式</div>
  <div class="a" style="left:271px;top:27px;font-size:9px">数据</div>
  <div class="a" style="left:306.5px;top:27px;font-size:9px">审阅</div>
  <div class="a" style="left:342.5px;top:27px;font-size:9px">视图</div>
  <div class="a" style="left:378px;top:27px;font-size:9px">帮助</div>
  <div class="a" style="left:825px;top:26.5px;width:38px;height:13px;background:#fff;border-radius:2px"></div>
  <svg class="a" style="left:830px;top:28px" width="10" height="9" viewBox="0 0 10 9"><path d="M1 4 L1 8.3 L8.5 8.3 L8.5 6 M3 6 C3 3.5 5 2.5 7.5 2.5 L7.5 0.8 L9.5 3 L7.5 5.2 L7.5 3.8 C5.5 3.8 4 4.5 3 6" fill="none" stroke="#217346" stroke-width="0.9"/></svg>
  <div class="a" style="left:843px;top:27.5px;font-weight:bold;color:#217346">共享</div>
  <!-- ribbon body: separators -->
  <div class="a sep" style="left:64px;top:46px;height:63px"></div>
  <div class="a sep" style="left:241px;top:46px;height:63px"></div>
  <div class="a sep" style="left:408px;top:46px;height:63px"></div>
  <div class="a sep" style="left:509px;top:46px;height:63px"></div>
  <div class="a sep" style="left:643px;top:46px;height:63px"></div>
  <div class="a sep" style="left:700px;top:46px;height:63px"></div>
  <div class="a sep" style="left:825px;top:46px;height:63px"></div>
  <div id="xlrib"></div>
  <!-- clipboard -->
  <svg class="a" style="left:11px;top:47px" width="20" height="23" viewBox="0 0 20 23"><rect x="1" y="4" width="13" height="17" rx="1" fill="#ececec" stroke="#b9b9b9"/><path d="M5 4 L5 2 Q7.5 0 10 2 L10 4 Z" fill="#ececec" stroke="#b9b9b9"/><rect x="8" y="9" width="10.5" height="13" fill="#f3f3f3" stroke="#b9b9b9"/></svg>
  <div class="a" style="left:11px;top:70px;color:#a6a6a6">粘贴</div>
  <svg class="a" style="left:17px;top:85px" width="7" height="4"><path d="M0.5 0.5 L3.5 3.2 L6.5 0.5" fill="none" stroke="#aaa" stroke-width="0.9"/></svg>
  <svg class="a" style="left:36px;top:48px" width="10" height="12" viewBox="0 0 10 12"><path d="M2.5 0.5 L6.5 8 M7.5 0.5 L3.5 8" stroke="#444" stroke-width="0.9"/><circle cx="2.5" cy="9.8" r="1.8" fill="#4a90d9"/><circle cx="7.5" cy="9.8" r="1.8" fill="#4a90d9"/></svg>
  <svg class="a" style="left:34px;top:65px" width="13" height="12" viewBox="0 0 13 12"><path d="M4 1 L1 1 L1 9 L4 9" fill="none" stroke="#555" stroke-width="0.9"/><path d="M4 3 L9 3 L12 6 L12 11.5 L4 11.5 Z" fill="#fff" stroke="#555" stroke-width="0.9"/><path d="M6 7 L10 7 M6 9 L10 9" stroke="#777" stroke-width="0.7"/></svg>
  <svg class="a" style="left:51px;top:70px" width="6" height="4"><path d="M0.5 0.5 L3 3 L5.5 0.5" fill="none" stroke="#555" stroke-width="0.9"/></svg>
  <svg class="a" style="left:35px;top:80px" width="12" height="13" viewBox="0 0 12 13"><path d="M1 8 L6 12 L9 6 L5 3 Z" fill="#f4a76a" stroke="#d9692a" stroke-width="0.9"/><path d="M6 4 L10 0.8 L11.5 2 L8 6" fill="#fff" stroke="#444" stroke-width="0.9"/></svg>
  <svg class="a" style="left:55.5px;top:100px" width="7" height="7"><path d="M0.5 0.5 L6 0.5 L6 6 M2 2 L6 6 M3.5 6 L6 6" fill="none" stroke="#777" stroke-width="0.9"/></svg>
  <!-- font -->
  <div class="a" style="left:69px;top:52px;width:111px;height:16px;background:#fff;border:1px solid #e1e1e1"></div>
  <div class="a" style="left:71px;top:55px;color:#333">等线</div>
  <svg class="a" style="left:174px;top:58px" width="6" height="4"><path d="M0.5 0.5 L3 3 L5.5 0.5" fill="none" stroke="#444" stroke-width="0.9"/></svg>
  <div class="a" style="left:180px;top:52px;width:27px;height:16px;background:#fff;border:1px solid #e1e1e1"></div>
  <div class="a" style="left:182px;top:54.5px;color:#444;font-size:9px">12</div>
  <svg class="a" style="left:199px;top:58px" width="6" height="4"><path d="M0.5 0.5 L3 3 L5.5 0.5" fill="none" stroke="#444" stroke-width="0.9"/></svg>
  <div class="a" style="left:208px;top:50px;font-size:13px;color:#444">A</div>
  <svg class="a" style="left:216px;top:51px" width="5" height="4"><path d="M0.5 3 L2.5 0.8 L4.5 3" fill="none" stroke="#444" stroke-width="0.8"/></svg>
  <div class="a" style="left:225px;top:53px;font-size:10.5px;color:#444">A</div>
  <svg class="a" style="left:232px;top:51px" width="5" height="4"><path d="M0.5 0.8 L2.5 3 L4.5 0.8" fill="none" stroke="#2f7ad1" stroke-width="0.8"/></svg>
  <div class="a" style="left:75px;top:76.5px;font-weight:bold;font-size:9px;color:#444">B</div>
  <div class="a" style="left:90px;top:76px;font-style:italic;font-size:10.5px;font-family:'Liberation Serif',serif;color:#333">I</div>
  <div class="a" style="left:105px;top:75px;font-size:10.5px;color:#333;text-decoration:underline">U</div>
  <svg class="a" style="left:118px;top:81px" width="6" height="4"><path d="M0.5 0.5 L3 3 L5.5 0.5" fill="none" stroke="#444" stroke-width="0.9"/></svg>
  <div class="a sep" style="left:126.5px;top:72px;height:17px"></div>
  <svg class="a" style="left:131px;top:76px" width="11" height="11" viewBox="0 0 11 11"><rect x="0.5" y="0.5" width="10" height="10" fill="none" stroke="#666" stroke-width="0.9" stroke-dasharray="1 1"/><path d="M5.5 0.5 L5.5 10.5 M0.5 5.5 L10.5 5.5" stroke="#999" stroke-width="0.7" stroke-dasharray="1 1"/><path d="M0.5 10.5 L10.5 10.5" stroke="#444" stroke-width="1"/></svg>
  <svg class="a" style="left:146px;top:81px" width="6" height="4"><path d="M0.5 0.5 L3 3 L5.5 0.5" fill="none" stroke="#444" stroke-width="0.9"/></svg>
  <svg class="a" style="left:160px;top:73px" width="12" height="15" viewBox="0 0 12 15"><path d="M2 7 L6 3 L10 7 L6 10.5 Z" fill="#fff" stroke="#444" stroke-width="0.9"/><path d="M5 1 L6.5 3" stroke="#444" stroke-width="0.9"/><rect x="0" y="12" width="11" height="3" fill="#ffef00"/></svg>
  <svg class="a" style="left:175px;top:81px" width="6" height="4"><path d="M0.5 0.5 L3 3 L5.5 0.5" fill="none" stroke="#444" stroke-width="0.9"/></svg>
  <div class="a" style="left:186.5px;top:72px;font-size:11px;color:#444">A</div>
  <div class="a" style="left:185px;top:84.5px;width:11px;height:3px;background:#e81123"></div>
  <svg class="a" style="left:200px;top:81px" width="6" height="4"><path d="M0.5 0.5 L3 3 L5.5 0.5" fill="none" stroke="#444" stroke-width="0.9"/></svg>
  <div class="a sep" style="left:210px;top:72px;height:17px"></div>
  <div class="a" style="left:215.5px;top:73px;font-size:5px;color:#888">wén</div>
  <div class="a" style="left:217px;top:79px;font-size:8px;color:#2f7ad1">文</div>
  <svg class="a" style="left:229px;top:81px" width="6" height="4"><path d="M0.5 0.5 L3 3 L5.5 0.5" fill="none" stroke="#444" stroke-width="0.9"/></svg>
  <svg class="a" style="left:234px;top:100px" width="7" height="7"><path d="M0.5 0.5 L6 0.5 L6 6 M2 2 L6 6 M3.5 6 L6 6" fill="none" stroke="#777" stroke-width="0.9"/></svg>
  <!-- alignment -->
  <svg class="a" style="left:250px;top:53px" width="10" height="9"><path d="M0 0.5 L10 0.5 M1 3.5 L9 3.5 M1 6 L9 6" stroke="#555" stroke-width="0.9"/></svg>
  <div class="a" style="left:263px;top:52px;width:15px;height:15px;background:#c8c6c4;border:1px solid #b3b0ad"></div>
  <svg class="a" style="left:265px;top:55px" width="10" height="9"><path d="M0 1 L10 1 M1 4.5 L9 4.5 M0 8 L10 8" stroke="#444" stroke-width="0.9"/></svg>
  <svg class="a" style="left:280px;top:57px" width="10" height="9"><path d="M1 2.5 L9 2.5 M1 5 L9 5 M0 8.5 L10 8.5" stroke="#555" stroke-width="0.9"/></svg>
  <svg class="a" style="left:299px;top:51px" width="12" height="12" viewBox="0 0 12 12"><path d="M1 4 L5 0.5 L8 4 M3 2 L6 5" fill="none" stroke="#555" stroke-width="0.9"/><path d="M4 10 L11 4" stroke="#2f7ad1" stroke-width="1"/><path d="M9 3.5 L11 4 L10.5 6" fill="none" stroke="#2f7ad1" stroke-width="0.9"/></svg>
  <svg class="a" style="left:312px;top:58px" width="6" height="4"><path d="M0.5 0.5 L3 3 L5.5 0.5" fill="none" stroke="#444" stroke-width="0.9"/></svg>
  <div class="a sep" style="left:329px;top:50px;height:40px"></div><div class="a sep" style="left:295px;top:53px;height:36px"></div>
  <svg class="a" style="left:335px;top:52px" width="11" height="12" viewBox="0 0 11 12"><path d="M1 1 L7 1 Q10 1 10 4 Q10 7 7 7 L3 7" fill="none" stroke="#2f7ad1" stroke-width="0.9"/><path d="M4.5 5 L2.5 7 L4.5 9" fill="none" stroke="#2f7ad1" stroke-width="0.9"/><path d="M1 4 L5 4 M1 10.5 L6 10.5" stroke="#555" stroke-width="0.9"/></svg>
  <div class="a" style="left:347px;top:54.5px;color:#444">自动换行</div>
  <svg class="a" style="left:250px;top:76px" width="10" height="11"><path d="M0 1 L10 1 M0 4 L7 4 M0 7 L10 7 M0 10 L7 10" stroke="#555" stroke-width="0.9"/></svg>
  <svg class="a" style="left:265px;top:76px" width="10" height="11"><path d="M0 1 L10 1 M1.5 4 L8.5 4 M0 7 L10 7 M1.5 10 L8.5 10" stroke="#555" stroke-width="0.9"/></svg>
  <svg class="a" style="left:281.5px;top:76px" width="10" height="11"><path d="M0 1 L10 1 M3 4 L10 4 M0 7 L10 7 M3 10 L10 10" stroke="#555" stroke-width="0.9"/></svg>
  <svg class="a" style="left:299px;top:76px" width="10" height="11"><path d="M0 1 L10 1 M4 4 L10 4 M4 7 L10 7 M0 10 L10 10" stroke="#555" stroke-width="0.9"/><path d="M3 5.5 L0.5 5.5 M1.8 4 L0.3 5.5 L1.8 7" fill="none" stroke="#2f7ad1" stroke-width="0.9"/></svg>
  <svg class="a" style="left:315px;top:76px" width="10" height="11"><path d="M0 1 L10 1 M4 4 L10 4 M4 7 L10 7 M0 10 L10 10" stroke="#555" stroke-width="0.9"/><path d="M0 5.5 L2.8 5.5 M1.5 4 L3 5.5 L1.5 7" fill="none" stroke="#2f7ad1" stroke-width="0.9"/></svg>
  <svg class="a" style="left:335px;top:75px" width="11" height="12" viewBox="0 0 11 12"><rect x="0.5" y="0.5" width="10" height="11" fill="#dbe9f8" stroke="#2f7ad1" stroke-width="0.9"/><path d="M2 6 L9 6 M3.5 4.5 L2 6 L3.5 7.5 M7.5 4.5 L9 6 L7.5 7.5" fill="none" stroke="#2f7ad1" stroke-width="0.9"/></svg>
  <div class="a" style="left:347px;top:77px;color:#444">合并后居中</div>
  <svg class="a" style="left:394px;top:81px" width="6" height="4"><path d="M0.5 0.5 L3 3 L5.5 0.5" fill="none" stroke="#444" stroke-width="0.9"/></svg>
  <svg class="a" style="left:402px;top:100px" width="7" height="7"><path d="M0.5 0.5 L6 0.5 L6 6 M2 2 L6 6 M3.5 6 L6 6" fill="none" stroke="#777" stroke-width="0.9"/></svg>
  <!-- number -->
  <div class="a" style="left:414px;top:52px;width:90.5px;height:16px;background:#fff;border:1px solid #e1e1e1"></div>
  <div class="a" style="left:416px;top:55.5px;color:#333">常规</div>
  <svg class="a" style="left:497px;top:58px" width="6" height="4"><path d="M0.5 0.5 L3 3 L5.5 0.5" fill="none" stroke="#444" stroke-width="0.9"/></svg>
  <svg class="a" style="left:416.5px;top:75px" width="13" height="12" viewBox="0 0 13 12"><rect x="0.5" y="1" width="9" height="7" fill="#fff" stroke="#555" stroke-width="0.9"/><path d="M2 3.5 L8 3.5 M2 5.5 L8 5.5" stroke="#777" stroke-width="0.7"/><rect x="6" y="6" width="6" height="5.5" fill="#f6a23a"/></svg>
  <svg class="a" style="left:432px;top:81px" width="6" height="4"><path d="M0.5 0.5 L3 3 L5.5 0.5" fill="none" stroke="#444" stroke-width="0.9"/></svg>
  <div class="a" style="left:441.5px;top:74px;font-size:12px;color:#555">%</div>
  <svg class="a" style="left:459.5px;top:77.5px" width="6" height="8" viewBox="0 0 6 8"><circle cx="3" cy="2.5" r="2.3" fill="#444"/><path d="M5.2 2.8 Q5 6 1.5 7.8" fill="none" stroke="#444" stroke-width="1.3"/></svg>
  <div class="a sep" style="left:471.5px;top:72px;height:17px"></div>
  <div class="a" style="left:475px;top:74px;font-size:6px;color:#444;line-height:6px">&larr;0<br>.00</div>
  <div class="a" style="left:492px;top:74px;font-size:6px;color:#444;line-height:6px">.00<br>&rarr;0</div>
  <svg class="a" style="left:502px;top:100px" width="7" height="7"><path d="M0.5 0.5 L6 0.5 L6 6 M2 2 L6 6 M3.5 6 L6 6" fill="none" stroke="#777" stroke-width="0.9"/></svg>
  <!-- styles -->
  <svg class="a" style="left:523px;top:50px" width="20" height="17" viewBox="0 0 20 17"><rect x="0.5" y="0.5" width="19" height="16" fill="#fff" stroke="#666" stroke-width="0.9"/><rect x="1" y="1" width="6" height="4" fill="#e8616e"/><rect x="7" y="6" width="12" height="5" fill="#e8616e"/><rect x="1" y="11.5" width="6" height="5" fill="#e8616e"/><path d="M0.5 5.5 L19.5 5.5 M0.5 11 L19.5 11 M7 0.5 L7 16.5" stroke="#666" stroke-width="0.8"/></svg>
  <div class="a" style="left:516px;top:70px;color:#444">条件格式</div>
  <svg class="a" style="left:530px;top:84px" width="6" height="4"><path d="M0.5 0.5 L3 3 L5.5 0.5" fill="none" stroke="#444" stroke-width="0.9"/></svg>
  <svg class="a" style="left:562px;top:49px" width="23" height="19" viewBox="0 0 23 19"><rect x="0.5" y="0.5" width="17" height="16" fill="#fff" stroke="#666" stroke-width="0.9"/><rect x="1" y="1" width="16" height="4" fill="#9dc3e6"/><path d="M0.5 5 L17.5 5 M0.5 9 L17.5 9 M0.5 13 L17.5 13 M6 0.5 L6 16.5 M12 0.5 L12 16.5" stroke="#666" stroke-width="0.7"/><path d="M10 17 L20 5 L22 7 L12 18.5 Z" fill="#2f7ad1" stroke="#1d5fa8" stroke-width="0.6"/></svg>
  <div class="a" style="left:563px;top:70px;color:#444">套用</div>
  <div class="a" style="left:552px;top:80.5px;color:#444">表格格式</div>
  <svg class="a" style="left:588px;top:84px" width="6" height="4"><path d="M0.5 0.5 L3 3 L5.5 0.5" fill="none" stroke="#444" stroke-width="0.9"/></svg>
  <svg class="a" style="left:606px;top:49px" width="22" height="19" viewBox="0 0 22 19"><rect x="0.5" y="0.5" width="17" height="15" fill="#fff" stroke="#666" stroke-width="0.9"/><rect x="3" y="5" width="12" height="7" fill="#5b9bd5"/><path d="M9 17 L19 5 L21 7 L11 18.5 Z" fill="#2f7ad1" stroke="#1d5fa8" stroke-width="0.6"/></svg>
  <div class="a" style="left:595.5px;top:70px;color:#444">单元格样式</div>
  <svg class="a" style="left:614px;top:84px" width="6" height="4"><path d="M0.5 0.5 L3 3 L5.5 0.5" fill="none" stroke="#444" stroke-width="0.9"/></svg>
  <!-- cells -->
  <svg class="a" style="left:651px;top:48px" width="12" height="11" viewBox="0 0 12 11"><rect x="0.5" y="0.5" width="11" height="10" fill="#fff" stroke="#555" stroke-width="0.8"/><path d="M0.5 4 L11.5 4 M0.5 7 L11.5 7 M4 0.5 L4 10.5" stroke="#555" stroke-width="0.7"/><rect x="1" y="4.3" width="5" height="2.5" fill="#2f7ad1"/></svg>
  <div class="a" style="left:664.5px;top:47.5px;color:#444">插入</div>
  <svg class="a" style="left:686px;top:52px" width="6" height="4"><path d="M0.5 0.5 L3 3 L5.5 0.5" fill="none" stroke="#444" stroke-width="0.9"/></svg>
  <svg class="a" style="left:651px;top:63px" width="12" height="11" viewBox="0 0 12 11"><rect x="0.5" y="0.5" width="11" height="10" fill="#fff" stroke="#555" stroke-width="0.8"/><path d="M0.5 4 L11.5 4 M0.5 7 L11.5 7" stroke="#555" stroke-width="0.7"/><path d="M5 3 L10 8 M10 3 L5 8" stroke="#e81123" stroke-width="1.1"/></svg>
  <div class="a" style="left:664.5px;top:62.5px;color:#444">删除</div>
  <svg class="a" style="left:686px;top:67px" width="6" height="4"><path d="M0.5 0.5 L3 3 L5.5 0.5" fill="none" stroke="#444" stroke-width="0.9"/></svg>
  <svg class="a" style="left:651px;top:78px" width="12" height="11" viewBox="0 0 12 11"><rect x="0.5" y="0.5" width="11" height="10" fill="#fff" stroke="#555" stroke-width="0.8"/><path d="M0.5 4 L11.5 4 M0.5 7 L11.5 7 M4 0.5 L4 10.5 M8 0.5 L8 10.5" stroke="#555" stroke-width="0.7"/></svg>
  <div class="a" style="left:664.5px;top:77.5px;color:#444">格式</div>
  <svg class="a" style="left:682px;top:82px" width="6" height="4"><path d="M0.5 0.5 L3 3 L5.5 0.5" fill="none" stroke="#444" stroke-width="0.9"/></svg>
  <!-- editing -->
  <div class="a" style="left:709px;top:46px;font-size:12px;color:#444">&Sigma;</div>
  <svg class="a" style="left:722px;top:52px" width="6" height="4"><path d="M0.5 0.5 L3 3 L5.5 0.5" fill="none" stroke="#444" stroke-width="0.9"/></svg>
  <svg class="a" style="left:709px;top:63px" width="11" height="11" viewBox="0 0 11 11"><rect x="0.5" y="0.5" width="10" height="10" fill="#fff" stroke="#555" stroke-width="0.8"/><path d="M5.5 2 L5.5 8 M3 5.5 L5.5 8 L8 5.5" fill="none" stroke="#2f7ad1" stroke-width="1"/></svg>
  <svg class="a" style="left:722px;top:67px" width="6" height="4"><path d="M0.5 0.5 L3 3 L5.5 0.5" fill="none" stroke="#444" stroke-width="0.9"/></svg>
  <svg class="a" style="left:709px;top:78px" width="12" height="10" viewBox="0 0 12 10"><path d="M1 5 L5 1 L11 5 L7 9 Z" fill="#c239b3" stroke="#a02597" stroke-width="0.6"/><path d="M3 3 L9 7" stroke="#fff" stroke-width="1"/></svg>
  <svg class="a" style="left:722px;top:82px" width="6" height="4"><path d="M0.5 0.5 L3 3 L5.5 0.5" fill="none" stroke="#444" stroke-width="0.9"/></svg>
  <div class="a" style="left:743.5px;top:48px;font-size:10px;color:#2f7ad1;line-height:9px">A<br><span style="color:#555">Z</span></div>
  <svg class="a" style="left:751.5px;top:53px" width="12" height="12" viewBox="0 0 12 12"><path d="M0.5 0.8 L11.5 0.8 L7 6 L7 11.5 L5 10.5 L5 6 Z" fill="none" stroke="#555" stroke-width="0.9"/></svg>
  <div class="a" style="left:732.5px;top:70px;color:#444">排序和筛选</div>
  <svg class="a" style="left:750px;top:84px" width="6" height="4"><path d="M0.5 0.5 L3 3 L5.5 0.5" fill="none" stroke="#444" stroke-width="0.9"/></svg>
  <svg class="a" style="left:787px;top:48px" width="21" height="19" viewBox="0 0 21 19"><circle cx="13" cy="7.5" r="6.5" fill="none" stroke="#555" stroke-width="1"/><path d="M8.4 12 L1 18.5" stroke="#555" stroke-width="1.2"/></svg>
  <div class="a" style="left:776px;top:70px;color:#444">查找和选择</div>
  <svg class="a" style="left:795px;top:84px" width="6" height="4"><path d="M0.5 0.5 L3 3 L5.5 0.5" fill="none" stroke="#444" stroke-width="0.9"/></svg>

  <!-- group labels -->
  <div class="a" style="left:14px;top:98px">剪贴板</div>
  <div class="a" style="left:138px;top:98px">字体</div>
  <div class="a" style="left:302px;top:98px">对齐方式</div>
  <div class="a" style="left:445px;top:98px">数字</div>
  <div class="a" style="left:568px;top:98px">样式</div>
  <div class="a" style="left:659px;top:98px">单元格</div>
  <div class="a" style="left:754.5px;top:98px">编辑</div>
  <svg class="a" style="left:860px;top:102px" width="8" height="5"><path d="M0.5 4.5 L4 1 L7.5 4.5" fill="none" stroke="#555" stroke-width="1"/></svg>
  <div class="a" style="left:0;top:109px;width:873px;height:2px;background:#dedede"></div>
  <!-- formula bar -->
  <div class="a" style="left:0;top:111px;width:873px;height:94px;background:#fff"></div>
  <div class="a" style="left:0;top:111px;width:873px;height:26px;background:#f3f3f3"></div>
  <div class="a" style="left:3.5px;top:117px;width:90px;height:16.5px;background:#fff;border:1px solid #e1e1e1"></div>
  <div class="a" style="left:6.5px;top:119.5px;color:#333;font-size:9.5px">A2</div>
  <svg class="a" style="left:85px;top:124px" width="5" height="4"><path d="M0 0.5 L5 0.5 L2.5 3.5Z" fill="#777"/></svg>
  <div class="a" style="left:103px;top:121px;width:1px;height:1px;background:#999;box-shadow:0 3px #999,0 6px #999"></div>
  <div class="a" style="left:114.5px;top:117px;width:73.5px;height:16.5px;background:#fff;border:1px solid #e1e1e1"></div>
  <svg class="a" style="left:123px;top:122px" width="8" height="8"><path d="M1 1 L7 7 M7 1 L1 7" stroke="#b5b5b5" stroke-width="1"/></svg>
  <svg class="a" style="left:146px;top:122px" width="9" height="8"><path d="M1 4.5 L3.5 7 L8 1" fill="none" stroke="#b5b5b5" stroke-width="1"/></svg>
  <div class="a" style="left:172px;top:119px;font-family:'Liberation Serif',serif;font-style:italic;font-size:10px;color:#555">f<span style="font-size:8px">x</span></div>
  <div class="a" style="left:191px;top:117px;width:678px;height:16.5px;background:#fff;border:1px solid #e1e1e1"></div>
  <div class="a" style="left:198px;top:119.5px;font-size:10px;color:#333">苹果</div>
  <svg class="a" style="left:860px;top:124px" width="7" height="5"><path d="M0.8 0.8 L3.5 3.5 L6.2 0.8" fill="none" stroke="#555" stroke-width="1.1"/></svg>
  <div id="grid"></div>
<div class="a" style="left:0;top:141px;width:873px;height:13px;background:#e6e6e6;border-bottom:1px solid #bdbdbd"></div>
<div class="a" style="left:0;top:154px;width:20.80000000000001px;height:60px;background:#e6e6e6;border-right:1px solid #bdbdbd"></div>
<svg class="a" style="left:10px;top:143px" width="10" height="10"><path d="M10 0 L10 9.5 L0 9.5Z" fill="#b8b8b8"/></svg>
<div class="a" style="left:20.80000000000001px;top:141px;width:55.89999999999998px;height:13px;background:#d2d2d2;border-bottom:1px solid #217346"></div>
<div class="a" style="left:0;top:154px;width:20.80000000000001px;height:60px;background:#d2d2d2;border-right:1px solid #bdbdbd"></div>
<div class="a" style="left:20.8px;top:141px;width:1px;height:13px;background:#c6c6c6"></div>
<div class="a" style="left:20.8px;top:154px;width:1px;height:60px;background:#e1e1e1"></div>
<div class="a" style="left:76.7px;top:141px;width:1px;height:13px;background:#c6c6c6"></div>
<div class="a" style="left:76.7px;top:154px;width:1px;height:60px;background:#e1e1e1"></div>
<div class="a" style="left:130.3px;top:141px;width:1px;height:13px;background:#c6c6c6"></div>
<div class="a" style="left:130.3px;top:154px;width:1px;height:60px;background:#e1e1e1"></div>
<div class="a" style="left:185.3px;top:141px;width:1px;height:13px;background:#c6c6c6"></div>
<div class="a" style="left:185.3px;top:154px;width:1px;height:60px;background:#e1e1e1"></div>
<div class="a" style="left:240.0px;top:141px;width:1px;height:13px;background:#c6c6c6"></div>
<div class="a" style="left:240.0px;top:154px;width:1px;height:60px;background:#e1e1e1"></div>
<div class="a" style="left:294.5px;top:141px;width:1px;height:13px;background:#c6c6c6"></div>
<div class="a" style="left:294.5px;top:154px;width:1px;height:60px;background:#e1e1e1"></div>
<div class="a" style="left:349.0px;top:141px;width:1px;height:13px;background:#c6c6c6"></div>
<div class="a" style="left:349.0px;top:154px;width:1px;height:60px;background:#e1e1e1"></div>
<div class="a" style="left:403.5px;top:141px;width:1px;height:13px;background:#c6c6c6"></div>
<div class="a" style="left:403.5px;top:154px;width:1px;height:60px;background:#e1e1e1"></div>
<div class="a" style="left:458.0px;top:141px;width:1px;height:13px;background:#c6c6c6"></div>
<div class="a" style="left:458.0px;top:154px;width:1px;height:60px;background:#e1e1e1"></div>
<div class="a" style="left:512.5px;top:141px;width:1px;height:13px;background:#c6c6c6"></div>
<div class="a" style="left:512.5px;top:154px;width:1px;height:60px;background:#e1e1e1"></div>
<div class="a" style="left:567.0px;top:141px;width:1px;height:13px;background:#c6c6c6"></div>
<div class="a" style="left:567.0px;top:154px;width:1px;height:60px;background:#e1e1e1"></div>
<div class="a" style="left:621.5px;top:141px;width:1px;height:13px;background:#c6c6c6"></div>
<div class="a" style="left:621.5px;top:154px;width:1px;height:60px;background:#e1e1e1"></div>
<div class="a" style="left:676.0px;top:141px;width:1px;height:13px;background:#c6c6c6"></div>
<div class="a" style="left:676.0px;top:154px;width:1px;height:60px;background:#e1e1e1"></div>
<div class="a" style="left:730.5px;top:141px;width:1px;height:13px;background:#c6c6c6"></div>
<div class="a" style="left:730.5px;top:154px;width:1px;height:60px;background:#e1e1e1"></div>
<div class="a" style="left:785.0px;top:141px;width:1px;height:13px;background:#c6c6c6"></div>
<div class="a" style="left:785.0px;top:154px;width:1px;height:60px;background:#e1e1e1"></div>
<div class="a" style="left:839.5px;top:141px;width:1px;height:13px;background:#c6c6c6"></div>
<div class="a" style="left:839.5px;top:154px;width:1px;height:60px;background:#e1e1e1"></div>
<div class="a" style="left:0;top:168.5px;width:858px;height:1px;background:#e1e1e1"></div>
<div class="a" style="left:0;top:168.5px;width:20.80000000000001px;height:1px;background:#bdbdbd"></div>
<div class="a" style="left:0;top:182.3px;width:858px;height:1px;background:#e1e1e1"></div>
<div class="a" style="left:0;top:182.3px;width:20.80000000000001px;height:1px;background:#bdbdbd"></div>
<div class="a" style="left:0;top:196.2px;width:858px;height:1px;background:#e1e1e1"></div>
<div class="a" style="left:0;top:196.2px;width:20.80000000000001px;height:1px;background:#bdbdbd"></div>
<div class="a" style="left:38.8px;width:20px;text-align:center;top:140.5px;font-size:10.5px;color:#217346">A</div>
<div class="a" style="left:93.5px;width:20px;text-align:center;top:140.5px;font-size:10.5px;color:#444">B</div>
<div class="a" style="left:147.8px;width:20px;text-align:center;top:140.5px;font-size:10.5px;color:#444">C</div>
<div class="a" style="left:202.6px;width:20px;text-align:center;top:140.5px;font-size:10.5px;color:#444">D</div>
<div class="a" style="left:257.2px;width:20px;text-align:center;top:140.5px;font-size:10.5px;color:#444">E</div>
<div class="a" style="left:311.8px;width:20px;text-align:center;top:140.5px;font-size:10.5px;color:#444">F</div>
<div class="a" style="left:366.2px;width:20px;text-align:center;top:140.5px;font-size:10.5px;color:#444">G</div>
<div class="a" style="left:420.8px;width:20px;text-align:center;top:140.5px;font-size:10.5px;color:#444">H</div>
<div class="a" style="left:475.2px;width:20px;text-align:center;top:140.5px;font-size:10.5px;color:#444">I</div>
<div class="a" style="left:529.8px;width:20px;text-align:center;top:140.5px;font-size:10.5px;color:#444">J</div>
<div class="a" style="left:584.2px;width:20px;text-align:center;top:140.5px;font-size:10.5px;color:#444">K</div>
<div class="a" style="left:638.8px;width:20px;text-align:center;top:140.5px;font-size:10.5px;color:#444">L</div>
<div class="a" style="left:693.2px;width:20px;text-align:center;top:140.5px;font-size:10.5px;color:#444">M</div>
<div class="a" style="left:747.8px;width:20px;text-align:center;top:140.5px;font-size:10.5px;color:#444">N</div>
<div class="a" style="left:802.2px;width:20px;text-align:center;top:140.5px;font-size:10.5px;color:#444">O</div>
<div class="a" style="left:21.8px;top:168.5px;width:54.9px;height:50px;background:#c6c6c6"></div>
<div class="a" style="left:21.8px;top:182.3px;width:54.9px;height:1px;background:#b5b5b5"></div>
<div class="a" style="left:21.8px;top:196.2px;width:54.9px;height:1px;background:#b5b5b5"></div>
<div class="a" style="left:20.8px;top:154px;width:56.9px;height:60px;border:1px solid #217346;border-bottom:none"></div>
<div class="a" style="left:0;width:21px;text-align:center;top:155.5px;font-size:10.5px;color:#2f6e4b">2</div>
<div class="a" style="left:24px;top:155.5px;font-size:10.5px;color:#222">苹果</div>
<div class="a" style="left:85px;width:43.5px;text-align:right;top:155.5px;font-size:10.5px;color:#222">13</div>
<div class="a" style="left:0;width:21px;text-align:center;top:170.0px;font-size:10.5px;color:#2f6e4b">3</div>
<div class="a" style="left:24px;top:170.0px;font-size:10.5px;color:#222">香蕉</div>
<div class="a" style="left:85px;width:43.5px;text-align:right;top:170.0px;font-size:10.5px;color:#222">14</div>
<div class="a" style="left:0;width:21px;text-align:center;top:183.8px;font-size:10.5px;color:#2f6e4b">4</div>
<div class="a" style="left:24px;top:183.8px;font-size:10.5px;color:#222">草莓</div>
<div class="a" style="left:85px;width:43.5px;text-align:right;top:183.8px;font-size:10.5px;color:#222">16</div>
<div class="a" style="left:0;width:21px;text-align:center;top:197.7px;font-size:10.5px;color:#2f6e4b">5</div>
<div class="a" style="left:24px;top:197.7px;font-size:10.5px;color:#222">荔枝</div>
<div class="a" style="left:85px;width:43.5px;text-align:right;top:197.7px;font-size:10.5px;color:#222">25</div>
<div class="a" style="left:858.8px;top:140px;width:14px;height:70px;background:#f0f0f0;border-left:1px solid #ddd"></div>
<div class="a" style="left:859.0px;top:142px;width:13px;height:11px;background:#fff;border:1px solid #ddd"></div>
<svg class="a" style="left:862.5px;top:145px" width="6" height="4"><path d="M0 3.5 L3 0.5 L6 3.5Z" fill="#555"/></svg>
<div class="a" style="left:861.5px;top:165.5px;width:9px;height:45px;background:#fff;border:1px solid #cfcfcf"></div>
  <!-- red rect -->
  <div class="a" style="left:493px;top:14.5px;width:111px;height:118.5px;border:1.6px solid #e43d3d"></div>
</div>

<!-- status -->
<!-- ===== context menu ===== -->
<div class="a" style="left:856px;top:85px;width:213px;height:167px;background:#fff;border:1px solid #c8c6c4;box-shadow:1px 2px 4px rgba(0,0,0,0.18);font-size:11.5px;color:#323130;letter-spacing:-0.2px">
  <div class="a" style="left:35px;top:6.5px">更新 标题 1 以匹配所选内容(<u>P</u>)</div>
  <div class="a" style="left:1px;top:28px;width:210px;height:26.5px;background:#d2d0ce"></div>
  <svg class="a" style="left:12px;top:32px" width="18" height="17" viewBox="0 0 18 17"><path d="M0.8 13 L6 1 L11.2 13 M3 8.5 L9 8.5" fill="none" stroke="#444" stroke-width="1.2"/><path d="M8 16 L9 13 L16 6 L17.5 7.5 L10.5 14.5 Z" fill="#2f7ad1" stroke="#2f7ad1" stroke-width="0.8"/></svg>
  <div class="a" style="left:35px;top:33.5px">修改(<u>M</u>)...</div>
  <div class="a" style="left:35px;top:60.5px">全选(<u>S</u>): (无数据)</div>
  <div class="a" style="left:31px;top:81.5px;width:179px;height:1px;background:#e1dfdd"></div>
  <div class="a" style="left:35px;top:89.5px">重命名(<u>N</u>)...</div>
  <div class="a" style="left:35px;top:115.5px">从样式库中删除(<u>G</u>)</div>
  <div class="a" style="left:31px;top:137.5px;width:179px;height:1px;background:#e1dfdd"></div>
  <div class="a" style="left:35px;top:143.5px">将库添加到快速访问工具栏(<u>A</u>)</div>
</div>
<!-- red highlight -->
<div class="a" style="left:789px;top:44px;width:193px;height:117.5px;border:4px solid #f0282d"></div>

<div class="a" style="left:0;top:617px;width:1200px;height:21px;background:#f3f2f1;border-top:1px solid #d8d8d8;font-size:11.5px;color:#444">
  <div class="a" style="left:7px;top:3.5px">第 1 页，共 9 页</div>
  <div class="a" style="left:107px;top:3.5px">6/889 个字</div>
  <svg class="a" style="left:181px;top:4.5px" width="14" height="13" viewBox="0 0 14 13"><path d="M0.6 12 L0.6 0.6 L11 0.6 L11 5" fill="none" stroke="#555" stroke-width="1.1"/><path d="M6 7 L12.5 12.5 M12.5 7 L6 12.5" stroke="#555" stroke-width="1.1"/></svg>
  <div class="a" style="left:211px;top:3.5px">中文(中国)</div>
  <div class="a" style="left:279.5px;top:3.5px">插入</div>
  <svg class="a" style="left:867px;top:4px" width="14" height="14" viewBox="0 0 14 14"><path d="M3 0.6 L0.6 0.6 L0.6 3 M11 0.6 L13.4 0.6 L13.4 3 M0.6 11 L0.6 13.4 L3 13.4 M13.4 11 L13.4 13.4 L11 13.4" fill="none" stroke="#555" stroke-width="1.1"/><path d="M4 3 L8 3 L10 5 L10 11 L4 11 Z" fill="none" stroke="#555" stroke-width="1.1"/></svg>
  <div class="a" style="left:883.5px;top:3.5px">专注</div>
  <svg class="a" style="left:928px;top:4px" width="14" height="14" viewBox="0 0 14 14"><path d="M7 2 L7 13 M7 2 Q4 0.8 0.8 1.5 L0.8 12.5 Q4 11.8 7 13 Q10 11.8 13.2 12.5 L13.2 1.5 Q10 0.8 7 2" fill="none" stroke="#555" stroke-width="1.1"/></svg>
  <div class="a" style="left:954px;top:0;width:37px;height:21px;background:#d2d0ce"></div>
  <svg class="a" style="left:966px;top:4px" width="12" height="14" viewBox="0 0 12 14"><rect x="0.6" y="0.6" width="10.8" height="12.8" fill="none" stroke="#444" stroke-width="1.1"/><path d="M3 3.5 L9 3.5 M3 5.5 L9 5.5 M3 7.5 L9 7.5 M3 9.5 L9 9.5" stroke="#444" stroke-width="1"/></svg>
  <svg class="a" style="left:1003px;top:3.5px" width="15" height="15" viewBox="0 0 15 15"><path d="M0.6 0.6 L12 0.6 L12 6 M6 13.4 L0.6 13.4 L0.6 0.6 M0.6 3 L12 3" fill="none" stroke="#555" stroke-width="1.1"/><circle cx="10.5" cy="10.5" r="4" fill="#444"/><path d="M10.5 8.8 L10.5 12.5" stroke="#fff" stroke-width="1.2"/></svg>
  <div class="a" style="left:1033px;top:10px;width:7px;height:1.3px;background:#555"></div>
  <div class="a" style="left:1046.5px;top:10.5px;width:92px;height:1.5px;background:#a6a6a6"></div>
  <div class="a" style="left:1092.5px;top:8px;width:1px;height:5px;background:#a6a6a6"></div>
  <div class="a" style="left:1098px;top:6px;width:5px;height:11px;background:#666"></div>
  <div class="a" style="left:1143px;top:10px;width:8.5px;height:1.3px;background:#555"></div>
  <div class="a" style="left:1146.6px;top:6.3px;width:1.3px;height:8.5px;background:#555"></div>
  <div class="a" style="left:1162.5px;top:2.5px;font-size:12.5px">168%</div>
</div>
<div class="a" style="left:0;top:638px;width:1200px;height:1px;background:#3c3c3c"></div>

</body></html>
